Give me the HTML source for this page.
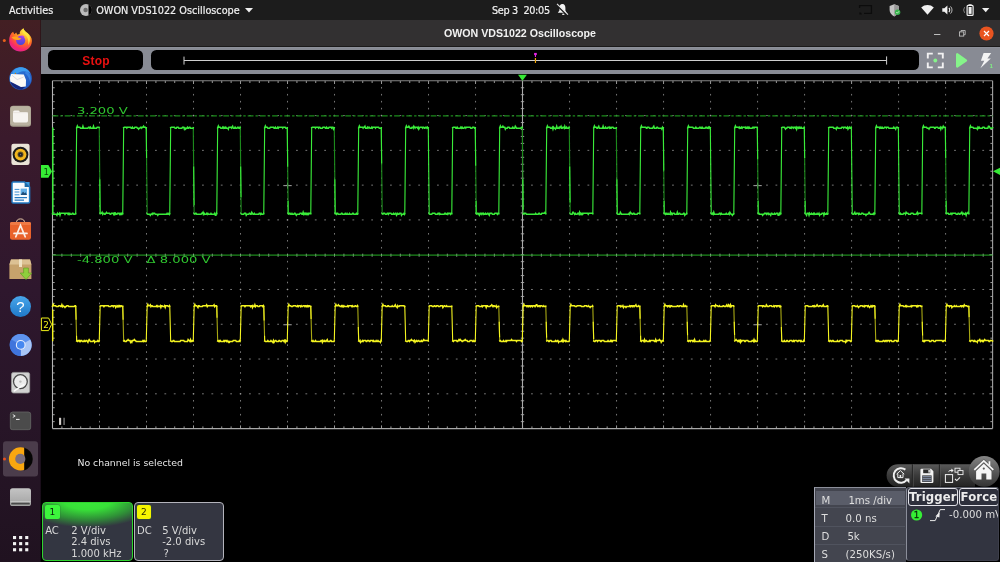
<!DOCTYPE html>
<html lang="en">
<head>
<meta charset="utf-8">
<title>OWON VDS1022 Oscilloscope</title>
<style>
*{box-sizing:border-box;margin:0;padding:0}
html,body{width:1000px;height:562px;overflow:hidden;background:#000}
body{position:relative;font-family:"DejaVu Sans","Liberation Sans",sans-serif;color:#dcdcdc}
#root{position:absolute;left:0;top:0;width:1000px;height:562px;overflow:hidden;will-change:transform;background:#000}
.abs{position:absolute}
.t{position:absolute;white-space:nowrap;line-height:1}
/* ---------- gnome top bar ---------- */
#topbar{left:0;top:0;width:1000px;height:20px;background:#1c1c1c}
.ub{font-family:"DejaVu Sans","Liberation Sans",sans-serif;color:#f0f0f0;font-size:9.7px;-webkit-text-stroke:.2px #f0f0f0}
/* ---------- dock ---------- */
#dock{left:0;top:20px;width:41px;height:542px;background:linear-gradient(180deg,#431f23 0%,#3a1a2c 22%,#2e172d 50%,#271527 75%,#201220 100%);border-right:1.2px solid rgba(0,0,0,.28)}
/* ---------- window ---------- */
#titlebar{left:41px;top:20px;width:959px;height:27px;background:#323031;border-bottom:1px solid #1b1a1a}
#toolbar{left:41px;top:47px;width:959px;height:27px;background:#888b94;border-top:1px solid #8d909a}
.pill{position:absolute;background:#000;border-radius:5.5px}
/* ---------- scope ---------- */
#scope{left:41px;top:74px;width:959px;height:488px;background:#000}
svg{position:absolute;left:0;top:0;overflow:visible}
.wide{font-family:"DejaVu Sans","Liberation Sans",sans-serif;font-size:9px;fill:#2fc62f}
/* ---------- bottom panels ---------- */
.chbox{position:absolute;top:502px;height:59.4px;border-radius:4px;font-size:10px;color:#d9d9d9}
.badge{position:absolute;left:2.1px;top:1.8px;width:14.5px;height:14.5px;border-radius:2px;color:#0b250b;box-shadow:0 0 0 .5px rgba(40,120,50,.5);font-size:9px;text-align:center;line-height:14.5px}
.row{position:absolute;white-space:nowrap;line-height:1}
#timebox{left:814px;top:487px;width:92px;height:75px;background:#43454f;border-left:1px solid #a4a7b4;border-top:1px solid #8c8f9a;padding-left:1px;font-size:10.2px;color:#dedede}
#trigbox{left:906px;top:487px;width:92.8px;height:74.2px;background:#323440;border:1px solid #3d3f4b;border-left-color:#8b8e9a;border-top-color:#5a5d68;border-radius:3px;overflow:hidden;font-size:10.2px;color:#dedede}
.tbtn{position:absolute;top:1.3px;height:17.4px;border:1px solid #e2e2e8;border-radius:3px;font-weight:bold;font-size:11.7px;color:#ececec;line-height:17.2px;letter-spacing:.12px;background:#2e303c;text-align:center;overflow:hidden}
</style>
</head>
<body>
<div id="root">

<!-- ======================= GNOME TOP BAR ======================= -->
<div class="abs" id="topbar">
  <span class="t ub" id="act" style="left:9.1px;top:6px">Activities</span>
  <svg width="14" height="14" style="left:78.7px;top:3px" viewBox="0 0 14 14"><circle cx="7" cy="7" r="6" fill="#bcbcbc"/><path d="M9.5 1.500A6.100 6.100 0 0 1 9.500 12.500Z" fill="#030303"/><circle cx="6.600" cy="7" r="2.200" fill="#6e6e6e"/></svg>
  <span class="t ub" id="appname" style="left:96.2px;top:6px">OWON VDS1022 Oscilloscope</span>
  <svg width="8" height="5" style="left:244.5px;top:8px" viewBox="0 0 8 5"><path d="M0 0H8L4 4.6Z" fill="#eee"/></svg>
  <span class="t ub" id="clock" style="left:492px;top:5.8px;letter-spacing:-.32px">Sep 3&nbsp; 20:05</span>
  <!-- bell muted -->
  <svg width="14" height="14" style="left:556px;top:3px" viewBox="0 0 14 14"><path d="M6.400 1C4.200 1 3.400 3 3.400 5V7.400L1.800 9.800H10.600L9.400 7.400V5C9.400 3 8.600 1 6.400 1Z" fill="#f2f2f2"/><ellipse cx="7.300" cy="11.300" rx="1.300" ry=".750" fill="#f2f2f2"/><path d="M.3 1.600L11.300 12.400" stroke="#1c1c1c" stroke-width="1.500"/><path d="M1 .9L12 11.700" stroke="#e4e4e4" stroke-width="1.150"/></svg>
  <!-- cast icon (very dark) -->
  <svg width="13" height="10" style="left:859px;top:4.5px" viewBox="0 0 13 10"><path d="M.6 3V.6H12.4V8.4H5" stroke="#0c0c0c" stroke-width="1.3" fill="none"/><path d="M.4 9.6V7.2A2.4 2.4 0 0 1 2.8 9.6Z" fill="#0c0c0c"/></svg>
  <!-- shield -->
  <svg width="12" height="13" style="left:889px;top:3.5px" viewBox="0 0 12 13"><path d="M5.2 0.3L.6 2V6C.6 9 2.6 11.2 5.2 12.4C7.8 11.2 9.8 9 9.8 6V2Z" fill="#c4c4c4"/><path d="M5.2 0.3V12.4C7.8 11.2 9.8 9 9.8 6V2Z" fill="#9a9a9a"/><circle cx="8.6" cy="8.2" r="2.7" fill="#35b34a"/><path d="M7.3 8.2L8.3 9.2L10 7.3" stroke="#dff5df" stroke-width=".8" fill="none"/></svg>
  <!-- wifi -->
  <svg width="13" height="10" style="left:921.3px;top:5px" viewBox="0 0 13 10"><path d="M6.5 9.8L.2 2.4A9.6 9.6 0 0 1 12.8 2.4Z" fill="#f0f0f0"/></svg>
  <!-- volume -->
  <svg width="12" height="10" style="left:942.3px;top:5px" viewBox="0 0 12 10"><path d="M.3 3.3H2.4L5.4.5V9.5L2.4 6.7H.3Z" fill="#f0f0f0"/><path d="M6.9 3A2.8 2.8 0 0 1 6.9 7" stroke="#f0f0f0" stroke-width="1.1" fill="none"/><path d="M8.5 1.4A5 5 0 0 1 8.5 8.6" stroke="#b5b5b5" stroke-width="1" fill="none"/></svg>
  <!-- battery -->
  <svg width="12" height="12" style="left:962.5px;top:3.5px" viewBox="0 0 12 12"><path d="M1.6 3.2L.6 6L1.6 8.8" stroke="#8d8d8d" stroke-width=".9" fill="none"/><rect x="5.6" y="0.3" width="3" height="1.4" fill="#f0f0f0"/><rect x="4.1" y="1.4" width="6" height="10" rx="1" fill="none" stroke="#f0f0f0" stroke-width="1.2"/><rect x="5.6" y="3" width="3" height="6.9" fill="#f0f0f0"/></svg>
  <svg width="8" height="5" style="left:981.8px;top:7.6px" viewBox="0 0 8 5"><path d="M0 0H7.4L3.7 4.2Z" fill="#eee"/></svg>
</div>

<!-- ======================= DOCK ======================= -->
<div class="abs" id="dock"></div>
<svg width="41" height="562" viewBox="0 0 41 562" id="dockicons">
  <defs>
    <radialGradient id="ffg" gradientUnits="userSpaceOnUse" cx="26" cy="30" r="24"><stop offset="0" stop-color="#fff245"/><stop offset=".3" stop-color="#ffb82c"/><stop offset=".58" stop-color="#ff6a25"/><stop offset=".82" stop-color="#f6286c"/><stop offset="1" stop-color="#d8249c"/></radialGradient><linearGradient id="ffp" x1="0" y1="0" x2="0" y2="1"><stop offset="0" stop-color="#a23fea"/><stop offset="1" stop-color="#4348d8"/></linearGradient>
    <linearGradient id="tbg" x1="0" y1="0" x2="1" y2="1"><stop offset="0" stop-color="#2f83e2"/><stop offset="1" stop-color="#1d4fb8"/></linearGradient>
    <linearGradient id="hlp" x1="0" y1="0" x2="0" y2="1"><stop offset="0" stop-color="#48a6ea"/><stop offset="1" stop-color="#1f78c8"/></linearGradient>
    <linearGradient id="drv" x1="0" y1="0" x2="0" y2="1"><stop offset="0" stop-color="#c4c4c4"/><stop offset="1" stop-color="#a2a2a2"/></linearGradient>
  </defs>
  <!-- firefox -->
  <circle cx="4.3" cy="40.4" r="1.5" fill="#e8601c"/>
  <path d="M9.2 41C9 36.600 10.400 33.600 13.100 31.800L14.300 34.200L16.200 32.600L17.300 34.800C18 34.200 19 33.900 19.700 33.900C19.400 31.600 21 29.600 23.400 28.200C23.600 30.200 25.400 31.400 27.400 33C30.400 35.400 32 38 31.900 41C31.800 47 26.700 51.500 20.500 51.500C14.400 51.500 9.400 47 9.200 41Z" fill="url(#ffg)"/>
  <path d="M23.400 28.200C23.600 30.200 25.400 31.400 27.400 33C30.200 35.400 31 40.200 28.200 45.200C29 40.600 27.400 36.600 24.600 34.600C22.400 33 21.600 30.800 23.400 28.200Z" fill="#ffe53e" opacity=".9"/>
  <circle cx="20.700" cy="40.400" r="4.600" fill="url(#ffp)"/>
  <path d="M11.400 37.400C13.600 36.200 16.800 36.400 18.200 37.600L21.400 38.400C20 39.800 17.800 40.400 16 39.800C14.200 39.200 12.800 38.600 11.400 37.400Z" fill="#ffa41e"/>
  <path d="M21 35.600C22.400 35.400 23.800 35.900 24.600 36.800L22.600 37.200Z" fill="#c23fe0"/>
  <!-- thunderbird -->
  <circle cx="20.600" cy="78.500" r="11.300" fill="url(#tbg)"/>
  <path d="M12.400 73.400C13.400 68.600 19 66.400 23 67.400C26.400 68.200 29.200 70.400 30.400 73.600C27.200 70.800 22.200 70.600 19 72.600C17 73.800 15.200 74.400 12.400 74.400Z" fill="#3b9df0"/>
  <path d="M27 70.800C30.400 73.600 31.600 78.600 30.200 83C29.600 79 28.200 75.400 24.800 73Z" fill="#3f8de8" opacity=".7"/>
  <path d="M10.200 81C11.400 86.400 16 89.700 21.600 89.700L26 86.200L21 87Z" fill="#14277c"/>
  <path d="M11.200 74L23.800 74.600L26 80L25.800 86.400L21 87L10.200 81.400L10 77.600Z" fill="#fbfaf6"/>
  <path d="M12 75.200L17.200 79.600L23.600 77" stroke="#d4d2d8" stroke-width=".8" fill="none"/>
  <circle cx="15.400" cy="73.400" r=".7" fill="#c47a1c"/>
  <!-- files -->
  <rect x="10" y="105.7" width="21" height="21" rx="3.2" fill="#a9a290"/>
  <rect x="10.6" y="106.3" width="19.8" height="19" rx="2.8" fill="#b9b2a0"/>
  <path d="M13 112.2A1.6 1.6 0 0 1 14.6 110.6H18.6L20 112H26.4A1.6 1.6 0 0 1 28 113.6V120.8A1.6 1.6 0 0 1 26.4 122.4H14.6A1.6 1.6 0 0 1 13 120.8Z" fill="#f6f4f0"/>
  <path d="M13 112.6H28" stroke="#e2ded6" stroke-width=".7"/>
  <!-- rhythmbox -->
  <rect x="11.4" y="143.8" width="18.2" height="21.2" rx="2.2" fill="#e9e3d6"/>
  <circle cx="20.5" cy="154.6" r="7.9" fill="#1b1b1b"/>
  <circle cx="20.5" cy="154.6" r="5.9" fill="#f2b61e"/>
  <circle cx="20.5" cy="154.6" r="3" fill="#6e5a22"/>
  <circle cx="20.5" cy="154.6" r="2.2" fill="#242424"/>
  <circle cx="20.5" cy="154.6" r=".7" fill="#777"/>
  <!-- libreoffice writer -->
  <path d="M12 183.2A1.2 1.2 0 0 1 13.2 182H24.6L29.6 187V201.8A1.2 1.2 0 0 1 28.4 203H13.2A1.2 1.2 0 0 1 12 201.8Z" fill="#fafcfe" stroke="#2179c2" stroke-width="1.5"/>
  <path d="M24.6 182L29.6 187H24.6Z" fill="#1c6aa8"/>
  <path d="M25.2 182H29.6V186.4Z" fill="#3b9be0"/>
  <path d="M14.6 189.4H19.4M14.6 192H19.4M14.6 194.8H19.4" stroke="#3b8fd0" stroke-width="1"/>
  <path d="M14.6 197.6H27M14.6 200.2H24" stroke="#2277bf" stroke-width="1.3"/>
  <rect x="20.6" y="188.6" width="6.4" height="6.4" fill="#62aee6"/>
  <path d="M20.6 195L23 191.4L24.6 193.2L25.6 192.2L27 195Z" fill="#1f4e79"/>
  <!-- ubuntu software -->
  <path d="M16.4 223A4.1 4.1 0 0 1 24.6 223" stroke="#e9c9a8" stroke-width="1" fill="none"/>
  <rect x="10" y="222" width="21" height="17.8" rx="2.2" fill="#e9622b"/>
  <rect x="10" y="222" width="21" height="3" rx="1.5" fill="#f07a45"/>
  <path d="M15.8 236.8L20.5 225.4L25.2 236.8M14 233.4H27" stroke="#fbeee6" stroke-width="1.7" fill="none" stroke-linecap="round"/>
  <!-- package installer -->
  <path d="M11 259.4H30L31.4 264.4V279H9.4V264.4Z" fill="#c6a26c"/>
  <path d="M11 259.4H30L31.4 264.4H9.4Z" fill="#dcc193"/>
  <rect x="19" y="259.4" width="3" height="7.6" fill="#efe3c6"/>
  <path d="M23.6 268H28.4V273H31.8L26 279.6L20.2 273H23.6Z" fill="#8fce3c" stroke="#5e9a20" stroke-width=".6"/>
  <!-- help -->
  <circle cx="20.5" cy="306.6" r="10.5" fill="url(#hlp)"/>
  <text x="20.5" y="312" font-family="Liberation Sans, sans-serif" font-size="15" fill="#fff" text-anchor="middle">?</text>
  <!-- chromium -->
  <circle cx="20.7" cy="344.9" r="11" fill="#4a80e2"/>
  <path d="M20.7 344.9L11.2 339.4A11 11 0 0 1 30.2 339.4Z" fill="#5e93ee"/>
  <path d="M20.7 344.9L30.2 339.4A11 11 0 0 1 20.7 355.9Z" fill="#a9c6f6"/>
  <path d="M20.7 344.9L20.7 355.9A11 11 0 0 1 11.2 339.4Z" fill="#3f74dc"/>
  <circle cx="20.7" cy="344.9" r="4.9" fill="#e8effc"/>
  <circle cx="20.7" cy="344.9" r="3.8" fill="#4688f0"/>
  <!-- disks -->
  <rect x="11.5" y="372.4" width="18.2" height="20.6" rx="2" fill="#d1d1d1" stroke="#9b9b9b" stroke-width=".8"/>
  <circle cx="20.4" cy="381.6" r="6.9" fill="#ececec" stroke="#484848" stroke-width="1.25"/>
  <circle cx="20.4" cy="381.6" r="1.2" fill="#bcbcbc"/>
  <path d="M14.4 390.8L23.6 384.6" stroke="#fafafa" stroke-width="1.6" stroke-linecap="round"/>
  <!-- terminal -->
  <rect x="10" y="411.8" width="21" height="18.2" rx="2.6" fill="#4b4b4b"/>
  <rect x="10.3" y="412.100" width="20.400" height="17.600" rx="2.400" fill="none" stroke="#636363" stroke-width=".700"/>
  <path d="M12.8 414.6L15.2 416L12.8 417.4" stroke="#f1f1f1" stroke-width=".9" fill="none"/>
  <path d="M16 419.4H19.6" stroke="#f1f1f1" stroke-width="1"/>
  <!-- active app (OWON) -->
  <rect x="3" y="441.3" width="35" height="35.2" rx="3" fill="#4b3c4b"/>
  <circle cx="4.5" cy="459" r="1.5" fill="#e9501c"/>
  <circle cx="20.5" cy="458.9" r="11.6" fill="#f9a70f"/>
  <path d="M24.2 447.4A12 12 0 0 1 24.2 470.400Z" fill="#050505"/>
  <circle cx="20.3" cy="458.9" r="5.1" fill="#7c6f7c"/>
  <!-- drive -->
  <rect x="10" y="488.2" width="21" height="17.8" rx="2.6" fill="url(#drv)"/>
  <path d="M10.400 501.600H30.600" stroke="#d2d2d2" stroke-width=".700"/>
  <path d="M12 503.700H29" stroke="#4a4a4a" stroke-width="1.700" stroke-linecap="round"/>
  <!-- app grid -->
  <g fill="#f3f3f3">
    <rect x="13" y="536" width="3.1" height="3.1"/><rect x="19.1" y="536" width="3.1" height="3.1"/><rect x="25.2" y="536" width="3.1" height="3.1"/>
    <rect x="13" y="542.1" width="3.1" height="3.1"/><rect x="19.1" y="542.1" width="3.1" height="3.1"/><rect x="25.2" y="542.1" width="3.1" height="3.1"/>
    <rect x="13" y="548.2" width="3.1" height="3.1"/><rect x="19.1" y="548.2" width="3.1" height="3.1"/><rect x="25.2" y="548.2" width="3.1" height="3.1"/>
  </g>
</svg>

<!-- ======================= WINDOW ======================= -->
<div class="abs" id="titlebar">
  <span class="t ub" id="wtitle" style="-webkit-text-stroke:0;left:403px;top:8.1px;font-size:10.65px;font-weight:bold;color:#f2f2f2;font-family:'Liberation Sans',sans-serif">OWON VDS1022 Oscilloscope</span>
  <svg width="8" height="2" style="left:893px;top:13.5px" viewBox="0 0 8 2"><rect width="6.4" height="1" fill="#bdbdbd"/></svg>
  <svg width="8" height="8" style="left:917.6px;top:9.8px" viewBox="0 0 8 8"><rect x=".5" y="1.9" width="4.2" height="4.2" fill="none" stroke="#bcbcbc" stroke-width=".9"/><path d="M2 1.9V.5H6.2V4.7H4.8" fill="none" stroke="#bcbcbc" stroke-width=".9"/></svg>
  <svg width="15" height="15" style="left:938.4px;top:5.6px" viewBox="0 0 15 15"><circle cx="7.5" cy="7.5" r="7.1" fill="#e95420"/><path d="M5 5L10 10M10 5L5 10" stroke="#fff" stroke-width="1.2"/></svg>
</div>

<div class="abs" id="toolbar">
  <div class="pill" style="left:7.2px;top:2.4px;width:95.2px;height:19.6px"></div>
  <span class="t" id="stop" style="left:41.3px;top:6.6px;font-size:12px;font-weight:bold;color:#ea1010;font-family:'Liberation Sans',sans-serif;letter-spacing:.18px">Stop</span>
  <div class="pill" style="left:110px;top:2.4px;width:768.2px;height:19.6px"></div>
  <svg width="959" height="27" viewBox="41 47 959 27" style="left:0;top:-1px">
    <path d="M184 60.5H886.6M184 56.6V64.6M886.6 56.4V64.6" stroke="#cfcfcf" stroke-width="1" fill="none"/>
    <path d="M534.1 54H536.8" stroke="#e323e3" stroke-width="2.2"/>
    <path d="M535.45 54V57" stroke="#e323e3" stroke-width="1.1"/>
    <path d="M535.45 58V63" stroke="#f2a500" stroke-width="1.2"/>
    <!-- single-shot / target -->
    <path d="M927.8 58.6V53.6H932.8M937.8 53.6H942.8V58.6M942.8 62.4V67.4H937.8M932.8 67.4H927.8V62.4" stroke="#f2f2f2" stroke-width="1.9" fill="none"/>
    <circle cx="935.3" cy="60.5" r="1.9" fill="#86f48a"/>
    <!-- play -->
    <path d="M956 54.2V66.6A1.2 1.2 0 0 0 957.8 67.6L966.6 61.4A1.1 1.1 0 0 0 966.6 59.6L957.8 53.2A1.2 1.2 0 0 0 956 54.2Z" fill="#86f48a"/>
    <!-- lightning -->
    <path d="M983.6 53H991.2L987.4 58.5H990.8L980.4 68.2L984.3 60.8H980.9Z" fill="#f4f4f4"/>
    <text x="989.6" y="68.2" font-family="Liberation Sans, sans-serif" font-weight="bold" font-size="6.2" fill="#7fee83">1</text>
  </svg>
</div>

<div class="abs" id="scope"></div>

<!-- ======================= SCOPE GRAPHICS ======================= -->
<svg width="1000" height="562" viewBox="0 0 1000 562" id="plot">
<path d="M99.5 86.96v1.6M99.5 93.91v1.6M99.5 100.87v1.6M99.5 107.82v1.6M99.5 114.78v1.6M99.5 121.74v1.6M99.5 128.69v1.6M99.5 135.65v1.6M99.5 142.6v1.6M99.5 149.56v1.6M99.5 156.52v1.6M99.5 163.47v1.6M99.5 170.43v1.6M99.5 177.38v1.6M99.5 184.34v1.6M99.5 191.3v1.6M99.5 198.25v1.6M99.5 205.21v1.6M99.5 212.16v1.6M99.5 219.12v1.6M99.5 226.08v1.6M99.5 233.03v1.6M99.5 239.99v1.6M99.5 246.94v1.6M99.5 253.9v1.6M99.5 260.86v1.6M99.5 267.81v1.6M99.5 274.77v1.6M99.5 281.72v1.6M99.5 288.68v1.6M99.5 295.64v1.6M99.5 302.59v1.6M99.5 309.55v1.6M99.5 316.5v1.6M99.5 323.46v1.6M99.5 330.42v1.6M99.5 337.37v1.6M99.5 344.33v1.6M99.5 351.28v1.6M99.5 358.24v1.6M99.5 365.2v1.6M99.5 372.15v1.6M99.5 379.11v1.6M99.5 386.06v1.6M99.5 393.02v1.6M99.5 399.98v1.6M99.5 406.93v1.6M99.5 413.89v1.6M99.5 420.84v1.6M146.51 86.96v1.6M146.51 93.91v1.6M146.51 100.87v1.6M146.51 107.82v1.6M146.51 114.78v1.6M146.51 121.74v1.6M146.51 128.69v1.6M146.51 135.65v1.6M146.51 142.6v1.6M146.51 149.56v1.6M146.51 156.52v1.6M146.51 163.47v1.6M146.51 170.43v1.6M146.51 177.38v1.6M146.51 184.34v1.6M146.51 191.3v1.6M146.51 198.25v1.6M146.51 205.21v1.6M146.51 212.16v1.6M146.51 219.12v1.6M146.51 226.08v1.6M146.51 233.03v1.6M146.51 239.99v1.6M146.51 246.94v1.6M146.51 253.9v1.6M146.51 260.86v1.6M146.51 267.81v1.6M146.51 274.77v1.6M146.51 281.72v1.6M146.51 288.68v1.6M146.51 295.64v1.6M146.51 302.59v1.6M146.51 309.55v1.6M146.51 316.5v1.6M146.51 323.46v1.6M146.51 330.42v1.6M146.51 337.37v1.6M146.51 344.33v1.6M146.51 351.28v1.6M146.51 358.24v1.6M146.51 365.2v1.6M146.51 372.15v1.6M146.51 379.11v1.6M146.51 386.06v1.6M146.51 393.02v1.6M146.51 399.98v1.6M146.51 406.93v1.6M146.51 413.89v1.6M146.51 420.84v1.6M193.52 86.96v1.6M193.52 93.91v1.6M193.52 100.87v1.6M193.52 107.82v1.6M193.52 114.78v1.6M193.52 121.74v1.6M193.52 128.69v1.6M193.52 135.65v1.6M193.52 142.6v1.6M193.52 149.56v1.6M193.52 156.52v1.6M193.52 163.47v1.6M193.52 170.43v1.6M193.52 177.38v1.6M193.52 184.34v1.6M193.52 191.3v1.6M193.52 198.25v1.6M193.52 205.21v1.6M193.52 212.16v1.6M193.52 219.12v1.6M193.52 226.08v1.6M193.52 233.03v1.6M193.52 239.99v1.6M193.52 246.94v1.6M193.52 253.9v1.6M193.52 260.86v1.6M193.52 267.81v1.6M193.52 274.77v1.6M193.52 281.72v1.6M193.52 288.68v1.6M193.52 295.64v1.6M193.52 302.59v1.6M193.52 309.55v1.6M193.52 316.5v1.6M193.52 323.46v1.6M193.52 330.42v1.6M193.52 337.37v1.6M193.52 344.33v1.6M193.52 351.28v1.6M193.52 358.24v1.6M193.52 365.2v1.6M193.52 372.15v1.6M193.52 379.11v1.6M193.52 386.06v1.6M193.52 393.02v1.6M193.52 399.98v1.6M193.52 406.93v1.6M193.52 413.89v1.6M193.52 420.84v1.6M240.52 86.96v1.6M240.52 93.91v1.6M240.52 100.87v1.6M240.52 107.82v1.6M240.52 114.78v1.6M240.52 121.74v1.6M240.52 128.69v1.6M240.52 135.65v1.6M240.52 142.6v1.6M240.52 149.56v1.6M240.52 156.52v1.6M240.52 163.47v1.6M240.52 170.43v1.6M240.52 177.38v1.6M240.52 184.34v1.6M240.52 191.3v1.6M240.52 198.25v1.6M240.52 205.21v1.6M240.52 212.16v1.6M240.52 219.12v1.6M240.52 226.08v1.6M240.52 233.03v1.6M240.52 239.99v1.6M240.52 246.94v1.6M240.52 253.9v1.6M240.52 260.86v1.6M240.52 267.81v1.6M240.52 274.77v1.6M240.52 281.72v1.6M240.52 288.68v1.6M240.52 295.64v1.6M240.52 302.59v1.6M240.52 309.55v1.6M240.52 316.5v1.6M240.52 323.46v1.6M240.52 330.42v1.6M240.52 337.37v1.6M240.52 344.33v1.6M240.52 351.28v1.6M240.52 358.24v1.6M240.52 365.2v1.6M240.52 372.15v1.6M240.52 379.11v1.6M240.52 386.06v1.6M240.52 393.02v1.6M240.52 399.98v1.6M240.52 406.93v1.6M240.52 413.89v1.6M240.52 420.84v1.6M287.52 86.96v1.6M287.52 93.91v1.6M287.52 100.87v1.6M287.52 107.82v1.6M287.52 114.78v1.6M287.52 121.74v1.6M287.52 128.69v1.6M287.52 135.65v1.6M287.52 142.6v1.6M287.52 149.56v1.6M287.52 156.52v1.6M287.52 163.47v1.6M287.52 170.43v1.6M287.52 177.38v1.6M287.52 184.34v1.6M287.52 191.3v1.6M287.52 198.25v1.6M287.52 205.21v1.6M287.52 212.16v1.6M287.52 219.12v1.6M287.52 226.08v1.6M287.52 233.03v1.6M287.52 239.99v1.6M287.52 246.94v1.6M287.52 253.9v1.6M287.52 260.86v1.6M287.52 267.81v1.6M287.52 274.77v1.6M287.52 281.72v1.6M287.52 288.68v1.6M287.52 295.64v1.6M287.52 302.59v1.6M287.52 309.55v1.6M287.52 316.5v1.6M287.52 323.46v1.6M287.52 330.42v1.6M287.52 337.37v1.6M287.52 344.33v1.6M287.52 351.28v1.6M287.52 358.24v1.6M287.52 365.2v1.6M287.52 372.15v1.6M287.52 379.11v1.6M287.52 386.06v1.6M287.52 393.02v1.6M287.52 399.98v1.6M287.52 406.93v1.6M287.52 413.89v1.6M287.52 420.84v1.6M334.53 86.96v1.6M334.53 93.91v1.6M334.53 100.87v1.6M334.53 107.82v1.6M334.53 114.78v1.6M334.53 121.74v1.6M334.53 128.69v1.6M334.53 135.65v1.6M334.53 142.6v1.6M334.53 149.56v1.6M334.53 156.52v1.6M334.53 163.47v1.6M334.53 170.43v1.6M334.53 177.38v1.6M334.53 184.34v1.6M334.53 191.3v1.6M334.53 198.25v1.6M334.53 205.21v1.6M334.53 212.16v1.6M334.53 219.12v1.6M334.53 226.08v1.6M334.53 233.03v1.6M334.53 239.99v1.6M334.53 246.94v1.6M334.53 253.9v1.6M334.53 260.86v1.6M334.53 267.81v1.6M334.53 274.77v1.6M334.53 281.72v1.6M334.53 288.68v1.6M334.53 295.64v1.6M334.53 302.59v1.6M334.53 309.55v1.6M334.53 316.5v1.6M334.53 323.46v1.6M334.53 330.42v1.6M334.53 337.37v1.6M334.53 344.33v1.6M334.53 351.28v1.6M334.53 358.24v1.6M334.53 365.2v1.6M334.53 372.15v1.6M334.53 379.11v1.6M334.53 386.06v1.6M334.53 393.02v1.6M334.53 399.98v1.6M334.53 406.93v1.6M334.53 413.89v1.6M334.53 420.84v1.6M381.54 86.96v1.6M381.54 93.91v1.6M381.54 100.87v1.6M381.54 107.82v1.6M381.54 114.78v1.6M381.54 121.74v1.6M381.54 128.69v1.6M381.54 135.65v1.6M381.54 142.6v1.6M381.54 149.56v1.6M381.54 156.52v1.6M381.54 163.47v1.6M381.54 170.43v1.6M381.54 177.38v1.6M381.54 184.34v1.6M381.54 191.3v1.6M381.54 198.25v1.6M381.54 205.21v1.6M381.54 212.16v1.6M381.54 219.12v1.6M381.54 226.08v1.6M381.54 233.03v1.6M381.54 239.99v1.6M381.54 246.94v1.6M381.54 253.9v1.6M381.54 260.86v1.6M381.54 267.81v1.6M381.54 274.77v1.6M381.54 281.72v1.6M381.54 288.68v1.6M381.54 295.64v1.6M381.54 302.59v1.6M381.54 309.55v1.6M381.54 316.5v1.6M381.54 323.46v1.6M381.54 330.42v1.6M381.54 337.37v1.6M381.54 344.33v1.6M381.54 351.28v1.6M381.54 358.24v1.6M381.54 365.2v1.6M381.54 372.15v1.6M381.54 379.11v1.6M381.54 386.06v1.6M381.54 393.02v1.6M381.54 399.98v1.6M381.54 406.93v1.6M381.54 413.89v1.6M381.54 420.84v1.6M428.54 86.96v1.6M428.54 93.91v1.6M428.54 100.87v1.6M428.54 107.82v1.6M428.54 114.78v1.6M428.54 121.74v1.6M428.54 128.69v1.6M428.54 135.65v1.6M428.54 142.6v1.6M428.54 149.56v1.6M428.54 156.52v1.6M428.54 163.47v1.6M428.54 170.43v1.6M428.54 177.38v1.6M428.54 184.34v1.6M428.54 191.3v1.6M428.54 198.25v1.6M428.54 205.21v1.6M428.54 212.16v1.6M428.54 219.12v1.6M428.54 226.08v1.6M428.54 233.03v1.6M428.54 239.99v1.6M428.54 246.94v1.6M428.54 253.9v1.6M428.54 260.86v1.6M428.54 267.81v1.6M428.54 274.77v1.6M428.54 281.72v1.6M428.54 288.68v1.6M428.54 295.64v1.6M428.54 302.59v1.6M428.54 309.55v1.6M428.54 316.5v1.6M428.54 323.46v1.6M428.54 330.42v1.6M428.54 337.37v1.6M428.54 344.33v1.6M428.54 351.28v1.6M428.54 358.24v1.6M428.54 365.2v1.6M428.54 372.15v1.6M428.54 379.11v1.6M428.54 386.06v1.6M428.54 393.02v1.6M428.54 399.98v1.6M428.54 406.93v1.6M428.54 413.89v1.6M428.54 420.84v1.6M475.55 86.96v1.6M475.55 93.91v1.6M475.55 100.87v1.6M475.55 107.82v1.6M475.55 114.78v1.6M475.55 121.74v1.6M475.55 128.69v1.6M475.55 135.65v1.6M475.55 142.6v1.6M475.55 149.56v1.6M475.55 156.52v1.6M475.55 163.47v1.6M475.55 170.43v1.6M475.55 177.38v1.6M475.55 184.34v1.6M475.55 191.3v1.6M475.55 198.25v1.6M475.55 205.21v1.6M475.55 212.16v1.6M475.55 219.12v1.6M475.55 226.08v1.6M475.55 233.03v1.6M475.55 239.99v1.6M475.55 246.94v1.6M475.55 253.9v1.6M475.55 260.86v1.6M475.55 267.81v1.6M475.55 274.77v1.6M475.55 281.72v1.6M475.55 288.68v1.6M475.55 295.64v1.6M475.55 302.59v1.6M475.55 309.55v1.6M475.55 316.5v1.6M475.55 323.46v1.6M475.55 330.42v1.6M475.55 337.37v1.6M475.55 344.33v1.6M475.55 351.28v1.6M475.55 358.24v1.6M475.55 365.2v1.6M475.55 372.15v1.6M475.55 379.11v1.6M475.55 386.06v1.6M475.55 393.02v1.6M475.55 399.98v1.6M475.55 406.93v1.6M475.55 413.89v1.6M475.55 420.84v1.6M569.56 86.96v1.6M569.56 93.91v1.6M569.56 100.87v1.6M569.56 107.82v1.6M569.56 114.78v1.6M569.56 121.74v1.6M569.56 128.69v1.6M569.56 135.65v1.6M569.56 142.6v1.6M569.56 149.56v1.6M569.56 156.52v1.6M569.56 163.47v1.6M569.56 170.43v1.6M569.56 177.38v1.6M569.56 184.34v1.6M569.56 191.3v1.6M569.56 198.25v1.6M569.56 205.21v1.6M569.56 212.16v1.6M569.56 219.12v1.6M569.56 226.08v1.6M569.56 233.03v1.6M569.56 239.99v1.6M569.56 246.94v1.6M569.56 253.9v1.6M569.56 260.86v1.6M569.56 267.81v1.6M569.56 274.77v1.6M569.56 281.72v1.6M569.56 288.68v1.6M569.56 295.64v1.6M569.56 302.59v1.6M569.56 309.55v1.6M569.56 316.5v1.6M569.56 323.46v1.6M569.56 330.42v1.6M569.56 337.37v1.6M569.56 344.33v1.6M569.56 351.28v1.6M569.56 358.24v1.6M569.56 365.2v1.6M569.56 372.15v1.6M569.56 379.11v1.6M569.56 386.06v1.6M569.56 393.02v1.6M569.56 399.98v1.6M569.56 406.93v1.6M569.56 413.89v1.6M569.56 420.84v1.6M616.56 86.96v1.6M616.56 93.91v1.6M616.56 100.87v1.6M616.56 107.82v1.6M616.56 114.78v1.6M616.56 121.74v1.6M616.56 128.69v1.6M616.56 135.65v1.6M616.56 142.6v1.6M616.56 149.56v1.6M616.56 156.52v1.6M616.56 163.47v1.6M616.56 170.43v1.6M616.56 177.38v1.6M616.56 184.34v1.6M616.56 191.3v1.6M616.56 198.25v1.6M616.56 205.21v1.6M616.56 212.16v1.6M616.56 219.12v1.6M616.56 226.08v1.6M616.56 233.03v1.6M616.56 239.99v1.6M616.56 246.94v1.6M616.56 253.9v1.6M616.56 260.86v1.6M616.56 267.81v1.6M616.56 274.77v1.6M616.56 281.72v1.6M616.56 288.68v1.6M616.56 295.64v1.6M616.56 302.59v1.6M616.56 309.55v1.6M616.56 316.5v1.6M616.56 323.46v1.6M616.56 330.42v1.6M616.56 337.37v1.6M616.56 344.33v1.6M616.56 351.28v1.6M616.56 358.24v1.6M616.56 365.2v1.6M616.56 372.15v1.6M616.56 379.11v1.6M616.56 386.06v1.6M616.56 393.02v1.6M616.56 399.98v1.6M616.56 406.93v1.6M616.56 413.89v1.6M616.56 420.84v1.6M663.57 86.96v1.6M663.57 93.91v1.6M663.57 100.87v1.6M663.57 107.82v1.6M663.57 114.78v1.6M663.57 121.74v1.6M663.57 128.69v1.6M663.57 135.65v1.6M663.57 142.6v1.6M663.57 149.56v1.6M663.57 156.52v1.6M663.57 163.47v1.6M663.57 170.43v1.6M663.57 177.38v1.6M663.57 184.34v1.6M663.57 191.3v1.6M663.57 198.25v1.6M663.57 205.21v1.6M663.57 212.16v1.6M663.57 219.12v1.6M663.57 226.08v1.6M663.57 233.03v1.6M663.57 239.99v1.6M663.57 246.94v1.6M663.57 253.9v1.6M663.57 260.86v1.6M663.57 267.81v1.6M663.57 274.77v1.6M663.57 281.72v1.6M663.57 288.68v1.6M663.57 295.64v1.6M663.57 302.59v1.6M663.57 309.55v1.6M663.57 316.5v1.6M663.57 323.46v1.6M663.57 330.42v1.6M663.57 337.37v1.6M663.57 344.33v1.6M663.57 351.28v1.6M663.57 358.24v1.6M663.57 365.2v1.6M663.57 372.15v1.6M663.57 379.11v1.6M663.57 386.06v1.6M663.57 393.02v1.6M663.57 399.98v1.6M663.57 406.93v1.6M663.57 413.89v1.6M663.57 420.84v1.6M710.57 86.96v1.6M710.57 93.91v1.6M710.57 100.87v1.6M710.57 107.82v1.6M710.57 114.78v1.6M710.57 121.74v1.6M710.57 128.69v1.6M710.57 135.65v1.6M710.57 142.6v1.6M710.57 149.56v1.6M710.57 156.52v1.6M710.57 163.47v1.6M710.57 170.43v1.6M710.57 177.38v1.6M710.57 184.34v1.6M710.57 191.3v1.6M710.57 198.25v1.6M710.57 205.21v1.6M710.57 212.16v1.6M710.57 219.12v1.6M710.57 226.08v1.6M710.57 233.03v1.6M710.57 239.99v1.6M710.57 246.94v1.6M710.57 253.9v1.6M710.57 260.86v1.6M710.57 267.81v1.6M710.57 274.77v1.6M710.57 281.72v1.6M710.57 288.68v1.6M710.57 295.64v1.6M710.57 302.59v1.6M710.57 309.55v1.6M710.57 316.5v1.6M710.57 323.46v1.6M710.57 330.42v1.6M710.57 337.37v1.6M710.57 344.33v1.6M710.57 351.28v1.6M710.57 358.24v1.6M710.57 365.2v1.6M710.57 372.15v1.6M710.57 379.11v1.6M710.57 386.06v1.6M710.57 393.02v1.6M710.57 399.98v1.6M710.57 406.93v1.6M710.57 413.89v1.6M710.57 420.84v1.6M757.58 86.96v1.6M757.58 93.91v1.6M757.58 100.87v1.6M757.58 107.82v1.6M757.58 114.78v1.6M757.58 121.74v1.6M757.58 128.69v1.6M757.58 135.65v1.6M757.58 142.6v1.6M757.58 149.56v1.6M757.58 156.52v1.6M757.58 163.47v1.6M757.58 170.43v1.6M757.58 177.38v1.6M757.58 184.34v1.6M757.58 191.3v1.6M757.58 198.25v1.6M757.58 205.21v1.6M757.58 212.16v1.6M757.58 219.12v1.6M757.58 226.08v1.6M757.58 233.03v1.6M757.58 239.99v1.6M757.58 246.94v1.6M757.58 253.9v1.6M757.58 260.86v1.6M757.58 267.81v1.6M757.58 274.77v1.6M757.58 281.72v1.6M757.58 288.68v1.6M757.58 295.64v1.6M757.58 302.59v1.6M757.58 309.55v1.6M757.58 316.5v1.6M757.58 323.46v1.6M757.58 330.42v1.6M757.58 337.37v1.6M757.58 344.33v1.6M757.58 351.28v1.6M757.58 358.24v1.6M757.58 365.2v1.6M757.58 372.15v1.6M757.58 379.11v1.6M757.58 386.06v1.6M757.58 393.02v1.6M757.58 399.98v1.6M757.58 406.93v1.6M757.58 413.89v1.6M757.58 420.84v1.6M804.58 86.96v1.6M804.58 93.91v1.6M804.58 100.87v1.6M804.58 107.82v1.6M804.58 114.78v1.6M804.58 121.74v1.6M804.58 128.69v1.6M804.58 135.65v1.6M804.58 142.6v1.6M804.58 149.56v1.6M804.58 156.52v1.6M804.58 163.47v1.6M804.58 170.43v1.6M804.58 177.38v1.6M804.58 184.34v1.6M804.58 191.3v1.6M804.58 198.25v1.6M804.58 205.21v1.6M804.58 212.16v1.6M804.58 219.12v1.6M804.58 226.08v1.6M804.58 233.03v1.6M804.58 239.99v1.6M804.58 246.94v1.6M804.58 253.9v1.6M804.58 260.86v1.6M804.58 267.81v1.6M804.58 274.77v1.6M804.58 281.72v1.6M804.58 288.68v1.6M804.58 295.64v1.6M804.58 302.59v1.6M804.58 309.55v1.6M804.58 316.5v1.6M804.58 323.46v1.6M804.58 330.42v1.6M804.58 337.37v1.6M804.58 344.33v1.6M804.58 351.28v1.6M804.58 358.24v1.6M804.58 365.2v1.6M804.58 372.15v1.6M804.58 379.11v1.6M804.58 386.06v1.6M804.58 393.02v1.6M804.58 399.98v1.6M804.58 406.93v1.6M804.58 413.89v1.6M804.58 420.84v1.6M851.59 86.96v1.6M851.59 93.91v1.6M851.59 100.87v1.6M851.59 107.82v1.6M851.59 114.78v1.6M851.59 121.74v1.6M851.59 128.69v1.6M851.59 135.65v1.6M851.59 142.6v1.6M851.59 149.56v1.6M851.59 156.52v1.6M851.59 163.47v1.6M851.59 170.43v1.6M851.59 177.38v1.6M851.59 184.34v1.6M851.59 191.3v1.6M851.59 198.25v1.6M851.59 205.21v1.6M851.59 212.16v1.6M851.59 219.12v1.6M851.59 226.08v1.6M851.59 233.03v1.6M851.59 239.99v1.6M851.59 246.94v1.6M851.59 253.9v1.6M851.59 260.86v1.6M851.59 267.81v1.6M851.59 274.77v1.6M851.59 281.72v1.6M851.59 288.68v1.6M851.59 295.64v1.6M851.59 302.59v1.6M851.59 309.55v1.6M851.59 316.5v1.6M851.59 323.46v1.6M851.59 330.42v1.6M851.59 337.37v1.6M851.59 344.33v1.6M851.59 351.28v1.6M851.59 358.24v1.6M851.59 365.2v1.6M851.59 372.15v1.6M851.59 379.11v1.6M851.59 386.06v1.6M851.59 393.02v1.6M851.59 399.98v1.6M851.59 406.93v1.6M851.59 413.89v1.6M851.59 420.84v1.6M898.59 86.96v1.6M898.59 93.91v1.6M898.59 100.87v1.6M898.59 107.82v1.6M898.59 114.78v1.6M898.59 121.74v1.6M898.59 128.69v1.6M898.59 135.65v1.6M898.59 142.6v1.6M898.59 149.56v1.6M898.59 156.52v1.6M898.59 163.47v1.6M898.59 170.43v1.6M898.59 177.38v1.6M898.59 184.34v1.6M898.59 191.3v1.6M898.59 198.25v1.6M898.59 205.21v1.6M898.59 212.16v1.6M898.59 219.12v1.6M898.59 226.08v1.6M898.59 233.03v1.6M898.59 239.99v1.6M898.59 246.94v1.6M898.59 253.9v1.6M898.59 260.86v1.6M898.59 267.81v1.6M898.59 274.77v1.6M898.59 281.72v1.6M898.59 288.68v1.6M898.59 295.64v1.6M898.59 302.59v1.6M898.59 309.55v1.6M898.59 316.5v1.6M898.59 323.46v1.6M898.59 330.42v1.6M898.59 337.37v1.6M898.59 344.33v1.6M898.59 351.28v1.6M898.59 358.24v1.6M898.59 365.2v1.6M898.59 372.15v1.6M898.59 379.11v1.6M898.59 386.06v1.6M898.59 393.02v1.6M898.59 399.98v1.6M898.59 406.93v1.6M898.59 413.89v1.6M898.59 420.84v1.6M945.6 86.96v1.6M945.6 93.91v1.6M945.6 100.87v1.6M945.6 107.82v1.6M945.6 114.78v1.6M945.6 121.74v1.6M945.6 128.69v1.6M945.6 135.65v1.6M945.6 142.6v1.6M945.6 149.56v1.6M945.6 156.52v1.6M945.6 163.47v1.6M945.6 170.43v1.6M945.6 177.38v1.6M945.6 184.34v1.6M945.6 191.3v1.6M945.6 198.25v1.6M945.6 205.21v1.6M945.6 212.16v1.6M945.6 219.12v1.6M945.6 226.08v1.6M945.6 233.03v1.6M945.6 239.99v1.6M945.6 246.94v1.6M945.6 253.9v1.6M945.6 260.86v1.6M945.6 267.81v1.6M945.6 274.77v1.6M945.6 281.72v1.6M945.6 288.68v1.6M945.6 295.64v1.6M945.6 302.59v1.6M945.6 309.55v1.6M945.6 316.5v1.6M945.6 323.46v1.6M945.6 330.42v1.6M945.6 337.37v1.6M945.6 344.33v1.6M945.6 351.28v1.6M945.6 358.24v1.6M945.6 365.2v1.6M945.6 372.15v1.6M945.6 379.11v1.6M945.6 386.06v1.6M945.6 393.02v1.6M945.6 399.98v1.6M945.6 406.93v1.6M945.6 413.89v1.6M945.6 420.84v1.6" stroke="#b0b0b0" stroke-width="1" fill="none" opacity=".68"/>
<path d="M61 115.58h1.8M70.4 115.58h1.8M79.8 115.58h1.8M89.2 115.58h1.8M98.6 115.58h1.8M108.01 115.58h1.8M117.41 115.58h1.8M126.81 115.58h1.8M136.21 115.58h1.8M145.61 115.58h1.8M155.01 115.58h1.8M164.41 115.58h1.8M173.81 115.58h1.8M183.21 115.58h1.8M192.61 115.58h1.8M202.02 115.58h1.8M211.42 115.58h1.8M220.82 115.58h1.8M230.22 115.58h1.8M239.62 115.58h1.8M249.02 115.58h1.8M258.42 115.58h1.8M267.82 115.58h1.8M277.22 115.58h1.8M286.62 115.58h1.8M296.03 115.58h1.8M305.43 115.58h1.8M314.83 115.58h1.8M324.23 115.58h1.8M333.63 115.58h1.8M343.03 115.58h1.8M352.43 115.58h1.8M361.83 115.58h1.8M371.23 115.58h1.8M380.63 115.58h1.8M390.04 115.58h1.8M399.44 115.58h1.8M408.84 115.58h1.8M418.24 115.58h1.8M427.64 115.58h1.8M437.04 115.58h1.8M446.44 115.58h1.8M455.84 115.58h1.8M465.24 115.58h1.8M474.65 115.58h1.8M484.05 115.58h1.8M493.45 115.58h1.8M502.85 115.58h1.8M512.25 115.58h1.8M521.65 115.58h1.8M531.05 115.58h1.8M540.45 115.58h1.8M549.85 115.58h1.8M559.25 115.58h1.8M568.65 115.58h1.8M578.06 115.58h1.8M587.46 115.58h1.8M596.86 115.58h1.8M606.26 115.58h1.8M615.66 115.58h1.8M625.06 115.58h1.8M634.46 115.58h1.8M643.86 115.58h1.8M653.26 115.58h1.8M662.66 115.58h1.8M672.07 115.58h1.8M681.47 115.58h1.8M690.87 115.58h1.8M700.27 115.58h1.8M709.67 115.58h1.8M719.07 115.58h1.8M728.47 115.58h1.8M737.87 115.58h1.8M747.27 115.58h1.8M756.67 115.58h1.8M766.08 115.58h1.8M775.48 115.58h1.8M784.88 115.58h1.8M794.28 115.58h1.8M803.68 115.58h1.8M813.08 115.58h1.8M822.48 115.58h1.8M831.88 115.58h1.8M841.28 115.58h1.8M850.69 115.58h1.8M860.09 115.58h1.8M869.49 115.58h1.8M878.89 115.58h1.8M888.29 115.58h1.8M897.69 115.58h1.8M907.09 115.58h1.8M916.49 115.58h1.8M925.89 115.58h1.8M935.29 115.58h1.8M944.7 115.58h1.8M954.1 115.58h1.8M963.5 115.58h1.8M972.9 115.58h1.8M982.3 115.58h1.8M61 150.36h1.8M70.4 150.36h1.8M79.8 150.36h1.8M89.2 150.36h1.8M98.6 150.36h1.8M108.01 150.36h1.8M117.41 150.36h1.8M126.81 150.36h1.8M136.21 150.36h1.8M145.61 150.36h1.8M155.01 150.36h1.8M164.41 150.36h1.8M173.81 150.36h1.8M183.21 150.36h1.8M192.61 150.36h1.8M202.02 150.36h1.8M211.42 150.36h1.8M220.82 150.36h1.8M230.22 150.36h1.8M239.62 150.36h1.8M249.02 150.36h1.8M258.42 150.36h1.8M267.82 150.36h1.8M277.22 150.36h1.8M286.62 150.36h1.8M296.03 150.36h1.8M305.43 150.36h1.8M314.83 150.36h1.8M324.23 150.36h1.8M333.63 150.36h1.8M343.03 150.36h1.8M352.43 150.36h1.8M361.83 150.36h1.8M371.23 150.36h1.8M380.63 150.36h1.8M390.04 150.36h1.8M399.44 150.36h1.8M408.84 150.36h1.8M418.24 150.36h1.8M427.64 150.36h1.8M437.04 150.36h1.8M446.44 150.36h1.8M455.84 150.36h1.8M465.24 150.36h1.8M474.65 150.36h1.8M484.05 150.36h1.8M493.45 150.36h1.8M502.85 150.36h1.8M512.25 150.36h1.8M521.65 150.36h1.8M531.05 150.36h1.8M540.45 150.36h1.8M549.85 150.36h1.8M559.25 150.36h1.8M568.65 150.36h1.8M578.06 150.36h1.8M587.46 150.36h1.8M596.86 150.36h1.8M606.26 150.36h1.8M615.66 150.36h1.8M625.06 150.36h1.8M634.46 150.36h1.8M643.86 150.36h1.8M653.26 150.36h1.8M662.66 150.36h1.8M672.07 150.36h1.8M681.47 150.36h1.8M690.87 150.36h1.8M700.27 150.36h1.8M709.67 150.36h1.8M719.07 150.36h1.8M728.47 150.36h1.8M737.87 150.36h1.8M747.27 150.36h1.8M756.67 150.36h1.8M766.08 150.36h1.8M775.48 150.36h1.8M784.88 150.36h1.8M794.28 150.36h1.8M803.68 150.36h1.8M813.08 150.36h1.8M822.48 150.36h1.8M831.88 150.36h1.8M841.28 150.36h1.8M850.69 150.36h1.8M860.09 150.36h1.8M869.49 150.36h1.8M878.89 150.36h1.8M888.29 150.36h1.8M897.69 150.36h1.8M907.09 150.36h1.8M916.49 150.36h1.8M925.89 150.36h1.8M935.29 150.36h1.8M944.7 150.36h1.8M954.1 150.36h1.8M963.5 150.36h1.8M972.9 150.36h1.8M982.3 150.36h1.8M61 185.14h1.8M70.4 185.14h1.8M79.8 185.14h1.8M89.2 185.14h1.8M98.6 185.14h1.8M108.01 185.14h1.8M117.41 185.14h1.8M126.81 185.14h1.8M136.21 185.14h1.8M145.61 185.14h1.8M155.01 185.14h1.8M164.41 185.14h1.8M173.81 185.14h1.8M183.21 185.14h1.8M192.61 185.14h1.8M202.02 185.14h1.8M211.42 185.14h1.8M220.82 185.14h1.8M230.22 185.14h1.8M239.62 185.14h1.8M249.02 185.14h1.8M258.42 185.14h1.8M267.82 185.14h1.8M277.22 185.14h1.8M286.62 185.14h1.8M296.03 185.14h1.8M305.43 185.14h1.8M314.83 185.14h1.8M324.23 185.14h1.8M333.63 185.14h1.8M343.03 185.14h1.8M352.43 185.14h1.8M361.83 185.14h1.8M371.23 185.14h1.8M380.63 185.14h1.8M390.04 185.14h1.8M399.44 185.14h1.8M408.84 185.14h1.8M418.24 185.14h1.8M427.64 185.14h1.8M437.04 185.14h1.8M446.44 185.14h1.8M455.84 185.14h1.8M465.24 185.14h1.8M474.65 185.14h1.8M484.05 185.14h1.8M493.45 185.14h1.8M502.85 185.14h1.8M512.25 185.14h1.8M521.65 185.14h1.8M531.05 185.14h1.8M540.45 185.14h1.8M549.85 185.14h1.8M559.25 185.14h1.8M568.65 185.14h1.8M578.06 185.14h1.8M587.46 185.14h1.8M596.86 185.14h1.8M606.26 185.14h1.8M615.66 185.14h1.8M625.06 185.14h1.8M634.46 185.14h1.8M643.86 185.14h1.8M653.26 185.14h1.8M662.66 185.14h1.8M672.07 185.14h1.8M681.47 185.14h1.8M690.87 185.14h1.8M700.27 185.14h1.8M709.67 185.14h1.8M719.07 185.14h1.8M728.47 185.14h1.8M737.87 185.14h1.8M747.27 185.14h1.8M756.67 185.14h1.8M766.08 185.14h1.8M775.48 185.14h1.8M784.88 185.14h1.8M794.28 185.14h1.8M803.68 185.14h1.8M813.08 185.14h1.8M822.48 185.14h1.8M831.88 185.14h1.8M841.28 185.14h1.8M850.69 185.14h1.8M860.09 185.14h1.8M869.49 185.14h1.8M878.89 185.14h1.8M888.29 185.14h1.8M897.69 185.14h1.8M907.09 185.14h1.8M916.49 185.14h1.8M925.89 185.14h1.8M935.29 185.14h1.8M944.7 185.14h1.8M954.1 185.14h1.8M963.5 185.14h1.8M972.9 185.14h1.8M982.3 185.14h1.8M61 219.92h1.8M70.4 219.92h1.8M79.8 219.92h1.8M89.2 219.92h1.8M98.6 219.92h1.8M108.01 219.92h1.8M117.41 219.92h1.8M126.81 219.92h1.8M136.21 219.92h1.8M145.61 219.92h1.8M155.01 219.92h1.8M164.41 219.92h1.8M173.81 219.92h1.8M183.21 219.92h1.8M192.61 219.92h1.8M202.02 219.92h1.8M211.42 219.92h1.8M220.82 219.92h1.8M230.22 219.92h1.8M239.62 219.92h1.8M249.02 219.92h1.8M258.42 219.92h1.8M267.82 219.92h1.8M277.22 219.92h1.8M286.62 219.92h1.8M296.03 219.92h1.8M305.43 219.92h1.8M314.83 219.92h1.8M324.23 219.92h1.8M333.63 219.92h1.8M343.03 219.92h1.8M352.43 219.92h1.8M361.83 219.92h1.8M371.23 219.92h1.8M380.63 219.92h1.8M390.04 219.92h1.8M399.44 219.92h1.8M408.84 219.92h1.8M418.24 219.92h1.8M427.64 219.92h1.8M437.04 219.92h1.8M446.44 219.92h1.8M455.84 219.92h1.8M465.24 219.92h1.8M474.65 219.92h1.8M484.05 219.92h1.8M493.45 219.92h1.8M502.85 219.92h1.8M512.25 219.92h1.8M521.65 219.92h1.8M531.05 219.92h1.8M540.45 219.92h1.8M549.85 219.92h1.8M559.25 219.92h1.8M568.65 219.92h1.8M578.06 219.92h1.8M587.46 219.92h1.8M596.86 219.92h1.8M606.26 219.92h1.8M615.66 219.92h1.8M625.06 219.92h1.8M634.46 219.92h1.8M643.86 219.92h1.8M653.26 219.92h1.8M662.66 219.92h1.8M672.07 219.92h1.8M681.47 219.92h1.8M690.87 219.92h1.8M700.27 219.92h1.8M709.67 219.92h1.8M719.07 219.92h1.8M728.47 219.92h1.8M737.87 219.92h1.8M747.27 219.92h1.8M756.67 219.92h1.8M766.08 219.92h1.8M775.48 219.92h1.8M784.88 219.92h1.8M794.28 219.92h1.8M803.68 219.92h1.8M813.08 219.92h1.8M822.48 219.92h1.8M831.88 219.92h1.8M841.28 219.92h1.8M850.69 219.92h1.8M860.09 219.92h1.8M869.49 219.92h1.8M878.89 219.92h1.8M888.29 219.92h1.8M897.69 219.92h1.8M907.09 219.92h1.8M916.49 219.92h1.8M925.89 219.92h1.8M935.29 219.92h1.8M944.7 219.92h1.8M954.1 219.92h1.8M963.5 219.92h1.8M972.9 219.92h1.8M982.3 219.92h1.8M61 289.48h1.8M70.4 289.48h1.8M79.8 289.48h1.8M89.2 289.48h1.8M98.6 289.48h1.8M108.01 289.48h1.8M117.41 289.48h1.8M126.81 289.48h1.8M136.21 289.48h1.8M145.61 289.48h1.8M155.01 289.48h1.8M164.41 289.48h1.8M173.81 289.48h1.8M183.21 289.48h1.8M192.61 289.48h1.8M202.02 289.48h1.8M211.42 289.48h1.8M220.82 289.48h1.8M230.22 289.48h1.8M239.62 289.48h1.8M249.02 289.48h1.8M258.42 289.48h1.8M267.82 289.48h1.8M277.22 289.48h1.8M286.62 289.48h1.8M296.03 289.48h1.8M305.43 289.48h1.8M314.83 289.48h1.8M324.23 289.48h1.8M333.63 289.48h1.8M343.03 289.48h1.8M352.43 289.48h1.8M361.83 289.48h1.8M371.23 289.48h1.8M380.63 289.48h1.8M390.04 289.48h1.8M399.44 289.48h1.8M408.84 289.48h1.8M418.24 289.48h1.8M427.64 289.48h1.8M437.04 289.48h1.8M446.44 289.48h1.8M455.84 289.48h1.8M465.24 289.48h1.8M474.65 289.48h1.8M484.05 289.48h1.8M493.45 289.48h1.8M502.85 289.48h1.8M512.25 289.48h1.8M521.65 289.48h1.8M531.05 289.48h1.8M540.45 289.48h1.8M549.85 289.48h1.8M559.25 289.48h1.8M568.65 289.48h1.8M578.06 289.48h1.8M587.46 289.48h1.8M596.86 289.48h1.8M606.26 289.48h1.8M615.66 289.48h1.8M625.06 289.48h1.8M634.46 289.48h1.8M643.86 289.48h1.8M653.26 289.48h1.8M662.66 289.48h1.8M672.07 289.48h1.8M681.47 289.48h1.8M690.87 289.48h1.8M700.27 289.48h1.8M709.67 289.48h1.8M719.07 289.48h1.8M728.47 289.48h1.8M737.87 289.48h1.8M747.27 289.48h1.8M756.67 289.48h1.8M766.08 289.48h1.8M775.48 289.48h1.8M784.88 289.48h1.8M794.28 289.48h1.8M803.68 289.48h1.8M813.08 289.48h1.8M822.48 289.48h1.8M831.88 289.48h1.8M841.28 289.48h1.8M850.69 289.48h1.8M860.09 289.48h1.8M869.49 289.48h1.8M878.89 289.48h1.8M888.29 289.48h1.8M897.69 289.48h1.8M907.09 289.48h1.8M916.49 289.48h1.8M925.89 289.48h1.8M935.29 289.48h1.8M944.7 289.48h1.8M954.1 289.48h1.8M963.5 289.48h1.8M972.9 289.48h1.8M982.3 289.48h1.8M61 324.26h1.8M70.4 324.26h1.8M79.8 324.26h1.8M89.2 324.26h1.8M98.6 324.26h1.8M108.01 324.26h1.8M117.41 324.26h1.8M126.81 324.26h1.8M136.21 324.26h1.8M145.61 324.26h1.8M155.01 324.26h1.8M164.41 324.26h1.8M173.81 324.26h1.8M183.21 324.26h1.8M192.61 324.26h1.8M202.02 324.26h1.8M211.42 324.26h1.8M220.82 324.26h1.8M230.22 324.26h1.8M239.62 324.26h1.8M249.02 324.26h1.8M258.42 324.26h1.8M267.82 324.26h1.8M277.22 324.26h1.8M286.62 324.26h1.8M296.03 324.26h1.8M305.43 324.26h1.8M314.83 324.26h1.8M324.23 324.26h1.8M333.63 324.26h1.8M343.03 324.26h1.8M352.43 324.26h1.8M361.83 324.26h1.8M371.23 324.26h1.8M380.63 324.26h1.8M390.04 324.26h1.8M399.44 324.26h1.8M408.84 324.26h1.8M418.24 324.26h1.8M427.64 324.26h1.8M437.04 324.26h1.8M446.44 324.26h1.8M455.84 324.26h1.8M465.24 324.26h1.8M474.65 324.26h1.8M484.05 324.26h1.8M493.45 324.26h1.8M502.85 324.26h1.8M512.25 324.26h1.8M521.65 324.26h1.8M531.05 324.26h1.8M540.45 324.26h1.8M549.85 324.26h1.8M559.25 324.26h1.8M568.65 324.26h1.8M578.06 324.26h1.8M587.46 324.26h1.8M596.86 324.26h1.8M606.26 324.26h1.8M615.66 324.26h1.8M625.06 324.26h1.8M634.46 324.26h1.8M643.86 324.26h1.8M653.26 324.26h1.8M662.66 324.26h1.8M672.07 324.26h1.8M681.47 324.26h1.8M690.87 324.26h1.8M700.27 324.26h1.8M709.67 324.26h1.8M719.07 324.26h1.8M728.47 324.26h1.8M737.87 324.26h1.8M747.27 324.26h1.8M756.67 324.26h1.8M766.08 324.26h1.8M775.48 324.26h1.8M784.88 324.26h1.8M794.28 324.26h1.8M803.68 324.26h1.8M813.08 324.26h1.8M822.48 324.26h1.8M831.88 324.26h1.8M841.28 324.26h1.8M850.69 324.26h1.8M860.09 324.26h1.8M869.49 324.26h1.8M878.89 324.26h1.8M888.29 324.26h1.8M897.69 324.26h1.8M907.09 324.26h1.8M916.49 324.26h1.8M925.89 324.26h1.8M935.29 324.26h1.8M944.7 324.26h1.8M954.1 324.26h1.8M963.5 324.26h1.8M972.9 324.26h1.8M982.3 324.26h1.8M61 359.04h1.8M70.4 359.04h1.8M79.8 359.04h1.8M89.2 359.04h1.8M98.6 359.04h1.8M108.01 359.04h1.8M117.41 359.04h1.8M126.81 359.04h1.8M136.21 359.04h1.8M145.61 359.04h1.8M155.01 359.04h1.8M164.41 359.04h1.8M173.81 359.04h1.8M183.21 359.04h1.8M192.61 359.04h1.8M202.02 359.04h1.8M211.42 359.04h1.8M220.82 359.04h1.8M230.22 359.04h1.8M239.62 359.04h1.8M249.02 359.04h1.8M258.42 359.04h1.8M267.82 359.04h1.8M277.22 359.04h1.8M286.62 359.04h1.8M296.03 359.04h1.8M305.43 359.04h1.8M314.83 359.04h1.8M324.23 359.04h1.8M333.63 359.04h1.8M343.03 359.04h1.8M352.43 359.04h1.8M361.83 359.04h1.8M371.23 359.04h1.8M380.63 359.04h1.8M390.04 359.04h1.8M399.44 359.04h1.8M408.84 359.04h1.8M418.24 359.04h1.8M427.64 359.04h1.8M437.04 359.04h1.8M446.44 359.04h1.8M455.84 359.04h1.8M465.24 359.04h1.8M474.65 359.04h1.8M484.05 359.04h1.8M493.45 359.04h1.8M502.85 359.04h1.8M512.25 359.04h1.8M521.65 359.04h1.8M531.05 359.04h1.8M540.45 359.04h1.8M549.85 359.04h1.8M559.25 359.04h1.8M568.65 359.04h1.8M578.06 359.04h1.8M587.46 359.04h1.8M596.86 359.04h1.8M606.26 359.04h1.8M615.66 359.04h1.8M625.06 359.04h1.8M634.46 359.04h1.8M643.86 359.04h1.8M653.26 359.04h1.8M662.66 359.04h1.8M672.07 359.04h1.8M681.47 359.04h1.8M690.87 359.04h1.8M700.27 359.04h1.8M709.67 359.04h1.8M719.07 359.04h1.8M728.47 359.04h1.8M737.87 359.04h1.8M747.27 359.04h1.8M756.67 359.04h1.8M766.08 359.04h1.8M775.48 359.04h1.8M784.88 359.04h1.8M794.28 359.04h1.8M803.68 359.04h1.8M813.08 359.04h1.8M822.48 359.04h1.8M831.88 359.04h1.8M841.28 359.04h1.8M850.69 359.04h1.8M860.09 359.04h1.8M869.49 359.04h1.8M878.89 359.04h1.8M888.29 359.04h1.8M897.69 359.04h1.8M907.09 359.04h1.8M916.49 359.04h1.8M925.89 359.04h1.8M935.29 359.04h1.8M944.7 359.04h1.8M954.1 359.04h1.8M963.5 359.04h1.8M972.9 359.04h1.8M982.3 359.04h1.8M61 393.82h1.8M70.4 393.82h1.8M79.8 393.82h1.8M89.2 393.82h1.8M98.6 393.82h1.8M108.01 393.82h1.8M117.41 393.82h1.8M126.81 393.82h1.8M136.21 393.82h1.8M145.61 393.82h1.8M155.01 393.82h1.8M164.41 393.82h1.8M173.81 393.82h1.8M183.21 393.82h1.8M192.61 393.82h1.8M202.02 393.82h1.8M211.42 393.82h1.8M220.82 393.82h1.8M230.22 393.82h1.8M239.62 393.82h1.8M249.02 393.82h1.8M258.42 393.82h1.8M267.82 393.82h1.8M277.22 393.82h1.8M286.62 393.82h1.8M296.03 393.82h1.8M305.43 393.82h1.8M314.83 393.82h1.8M324.23 393.82h1.8M333.63 393.82h1.8M343.03 393.82h1.8M352.43 393.82h1.8M361.83 393.82h1.8M371.23 393.82h1.8M380.63 393.82h1.8M390.04 393.82h1.8M399.44 393.82h1.8M408.84 393.82h1.8M418.24 393.82h1.8M427.64 393.82h1.8M437.04 393.82h1.8M446.44 393.82h1.8M455.84 393.82h1.8M465.24 393.82h1.8M474.65 393.82h1.8M484.05 393.82h1.8M493.45 393.82h1.8M502.85 393.82h1.8M512.25 393.82h1.8M521.65 393.82h1.8M531.05 393.82h1.8M540.45 393.82h1.8M549.85 393.82h1.8M559.25 393.82h1.8M568.65 393.82h1.8M578.06 393.82h1.8M587.46 393.82h1.8M596.86 393.82h1.8M606.26 393.82h1.8M615.66 393.82h1.8M625.06 393.82h1.8M634.46 393.82h1.8M643.86 393.82h1.8M653.26 393.82h1.8M662.66 393.82h1.8M672.07 393.82h1.8M681.47 393.82h1.8M690.87 393.82h1.8M700.27 393.82h1.8M709.67 393.82h1.8M719.07 393.82h1.8M728.47 393.82h1.8M737.87 393.82h1.8M747.27 393.82h1.8M756.67 393.82h1.8M766.08 393.82h1.8M775.48 393.82h1.8M784.88 393.82h1.8M794.28 393.82h1.8M803.68 393.82h1.8M813.08 393.82h1.8M822.48 393.82h1.8M831.88 393.82h1.8M841.28 393.82h1.8M850.69 393.82h1.8M860.09 393.82h1.8M869.49 393.82h1.8M878.89 393.82h1.8M888.29 393.82h1.8M897.69 393.82h1.8M907.09 393.82h1.8M916.49 393.82h1.8M925.89 393.82h1.8M935.29 393.82h1.8M944.7 393.82h1.8M954.1 393.82h1.8M963.5 393.82h1.8M972.9 393.82h1.8M982.3 393.82h1.8" stroke="#b0b0b0" stroke-width="1" fill="none" opacity=".68"/>
<path d="M61.9 80.8v2.2M61.9 428.6v-2.2M71.3 80.8v2.2M71.3 428.6v-2.2M80.7 80.8v2.2M80.7 428.6v-2.2M90.1 80.8v2.2M90.1 428.6v-2.2M99.5 80.8v3.2M99.5 428.6v-3.2M108.91 80.8v2.2M108.91 428.6v-2.2M118.31 80.8v2.2M118.31 428.6v-2.2M127.71 80.8v2.2M127.71 428.6v-2.2M137.11 80.8v2.2M137.11 428.6v-2.2M146.51 80.8v3.2M146.51 428.6v-3.2M155.91 80.8v2.2M155.91 428.6v-2.2M165.31 80.8v2.2M165.31 428.6v-2.2M174.71 80.8v2.2M174.71 428.6v-2.2M184.11 80.8v2.2M184.11 428.6v-2.2M193.51 80.8v3.2M193.51 428.6v-3.2M202.92 80.8v2.2M202.92 428.6v-2.2M212.32 80.8v2.2M212.32 428.6v-2.2M221.72 80.8v2.2M221.72 428.6v-2.2M231.12 80.8v2.2M231.12 428.6v-2.2M240.52 80.8v3.2M240.52 428.6v-3.2M249.92 80.8v2.2M249.92 428.6v-2.2M259.32 80.8v2.2M259.32 428.6v-2.2M268.72 80.8v2.2M268.72 428.6v-2.2M278.12 80.8v2.2M278.12 428.6v-2.2M287.52 80.8v3.2M287.52 428.6v-3.2M296.93 80.8v2.2M296.93 428.6v-2.2M306.33 80.8v2.2M306.33 428.6v-2.2M315.73 80.8v2.2M315.73 428.6v-2.2M325.13 80.8v2.2M325.13 428.6v-2.2M334.53 80.8v3.2M334.53 428.6v-3.2M343.93 80.8v2.2M343.93 428.6v-2.2M353.33 80.8v2.2M353.33 428.6v-2.2M362.73 80.8v2.2M362.73 428.6v-2.2M372.13 80.8v2.2M372.13 428.6v-2.2M381.53 80.8v3.2M381.53 428.6v-3.2M390.94 80.8v2.2M390.94 428.6v-2.2M400.34 80.8v2.2M400.34 428.6v-2.2M409.74 80.8v2.2M409.74 428.6v-2.2M419.14 80.8v2.2M419.14 428.6v-2.2M428.54 80.8v3.2M428.54 428.6v-3.2M437.94 80.8v2.2M437.94 428.6v-2.2M447.34 80.8v2.2M447.34 428.6v-2.2M456.74 80.8v2.2M456.74 428.6v-2.2M466.14 80.8v2.2M466.14 428.6v-2.2M475.55 80.8v3.2M475.55 428.6v-3.2M484.95 80.8v2.2M484.95 428.6v-2.2M494.35 80.8v2.2M494.35 428.6v-2.2M503.75 80.8v2.2M503.75 428.6v-2.2M513.15 80.8v2.2M513.15 428.6v-2.2M522.55 80.8v3.2M522.55 428.6v-3.2M531.95 80.8v2.2M531.95 428.6v-2.2M541.35 80.8v2.2M541.35 428.6v-2.2M550.75 80.8v2.2M550.75 428.6v-2.2M560.15 80.8v2.2M560.15 428.6v-2.2M569.55 80.8v3.2M569.55 428.6v-3.2M578.96 80.8v2.2M578.96 428.6v-2.2M588.36 80.8v2.2M588.36 428.6v-2.2M597.76 80.8v2.2M597.76 428.6v-2.2M607.16 80.8v2.2M607.16 428.6v-2.2M616.56 80.8v3.2M616.56 428.6v-3.2M625.96 80.8v2.2M625.96 428.6v-2.2M635.36 80.8v2.2M635.36 428.6v-2.2M644.76 80.8v2.2M644.76 428.6v-2.2M654.16 80.8v2.2M654.16 428.6v-2.2M663.56 80.8v3.2M663.56 428.6v-3.2M672.97 80.8v2.2M672.97 428.6v-2.2M682.37 80.8v2.2M682.37 428.6v-2.2M691.77 80.8v2.2M691.77 428.6v-2.2M701.17 80.8v2.2M701.17 428.6v-2.2M710.57 80.8v3.2M710.57 428.6v-3.2M719.97 80.8v2.2M719.97 428.6v-2.2M729.37 80.8v2.2M729.37 428.6v-2.2M738.77 80.8v2.2M738.77 428.6v-2.2M748.17 80.8v2.2M748.17 428.6v-2.2M757.57 80.8v3.2M757.57 428.6v-3.2M766.98 80.8v2.2M766.98 428.6v-2.2M776.38 80.8v2.2M776.38 428.6v-2.2M785.78 80.8v2.2M785.78 428.6v-2.2M795.18 80.8v2.2M795.18 428.6v-2.2M804.58 80.8v3.2M804.58 428.6v-3.2M813.98 80.8v2.2M813.98 428.6v-2.2M823.38 80.8v2.2M823.38 428.6v-2.2M832.78 80.8v2.2M832.78 428.6v-2.2M842.18 80.8v2.2M842.18 428.6v-2.2M851.59 80.8v3.2M851.59 428.6v-3.2M860.99 80.8v2.2M860.99 428.6v-2.2M870.39 80.8v2.2M870.39 428.6v-2.2M879.79 80.8v2.2M879.79 428.6v-2.2M889.19 80.8v2.2M889.19 428.6v-2.2M898.59 80.8v3.2M898.59 428.6v-3.2M907.99 80.8v2.2M907.99 428.6v-2.2M917.39 80.8v2.2M917.39 428.6v-2.2M926.79 80.8v2.2M926.79 428.6v-2.2M936.19 80.8v2.2M936.19 428.6v-2.2M945.6 80.8v3.2M945.6 428.6v-3.2M955 80.8v2.2M955 428.6v-2.2M964.4 80.8v2.2M964.4 428.6v-2.2M973.8 80.8v2.2M973.8 428.6v-2.2M983.2 80.8v2.2M983.2 428.6v-2.2M52.5 87.76h2.2M992.6 87.76h-2.2M52.5 94.71h2.2M992.6 94.71h-2.2M52.5 101.67h2.2M992.6 101.67h-2.2M52.5 108.62h2.2M992.6 108.62h-2.2M52.5 115.58h3.2M992.6 115.58h-3.2M52.5 122.54h2.2M992.6 122.54h-2.2M52.5 129.49h2.2M992.6 129.49h-2.2M52.5 136.45h2.2M992.6 136.45h-2.2M52.5 143.4h2.2M992.6 143.4h-2.2M52.5 150.36h3.2M992.6 150.36h-3.2M52.5 157.32h2.2M992.6 157.32h-2.2M52.5 164.27h2.2M992.6 164.27h-2.2M52.5 171.23h2.2M992.6 171.23h-2.2M52.5 178.18h2.2M992.6 178.18h-2.2M52.5 185.14h3.2M992.6 185.14h-3.2M52.5 192.1h2.2M992.6 192.1h-2.2M52.5 199.05h2.2M992.6 199.05h-2.2M52.5 206.01h2.2M992.6 206.01h-2.2M52.5 212.96h2.2M992.6 212.96h-2.2M52.5 219.92h3.2M992.6 219.92h-3.2M52.5 226.88h2.2M992.6 226.88h-2.2M52.5 233.83h2.2M992.6 233.83h-2.2M52.5 240.79h2.2M992.6 240.79h-2.2M52.5 247.74h2.2M992.6 247.74h-2.2M52.5 254.7h3.2M992.6 254.7h-3.2M52.5 261.66h2.2M992.6 261.66h-2.2M52.5 268.61h2.2M992.6 268.61h-2.2M52.5 275.57h2.2M992.6 275.57h-2.2M52.5 282.52h2.2M992.6 282.52h-2.2M52.5 289.48h3.2M992.6 289.48h-3.2M52.5 296.44h2.2M992.6 296.44h-2.2M52.5 303.39h2.2M992.6 303.39h-2.2M52.5 310.35h2.2M992.6 310.35h-2.2M52.5 317.3h2.2M992.6 317.3h-2.2M52.5 324.26h3.2M992.6 324.26h-3.2M52.5 331.22h2.2M992.6 331.22h-2.2M52.5 338.17h2.2M992.6 338.17h-2.2M52.5 345.13h2.2M992.6 345.13h-2.2M52.5 352.08h2.2M992.6 352.08h-2.2M52.5 359.04h3.2M992.6 359.04h-3.2M52.5 366h2.2M992.6 366h-2.2M52.5 372.95h2.2M992.6 372.95h-2.2M52.5 379.91h2.2M992.6 379.91h-2.2M52.5 386.86h2.2M992.6 386.86h-2.2M52.5 393.82h3.2M992.6 393.82h-3.2M52.5 400.78h2.2M992.6 400.78h-2.2M52.5 407.73h2.2M992.6 407.73h-2.2M52.5 414.69h2.2M992.6 414.69h-2.2M52.5 421.64h2.2M992.6 421.64h-2.2M520.8 87.76h3.4M520.8 94.71h3.4M520.8 101.67h3.4M520.8 108.62h3.4M520.8 115.58h3.4M520.8 122.54h3.4M520.8 129.49h3.4M520.8 136.45h3.4M520.8 143.4h3.4M520.8 150.36h3.4M520.8 157.32h3.4M520.8 164.27h3.4M520.8 171.23h3.4M520.8 178.18h3.4M520.8 185.14h3.4M520.8 192.1h3.4M520.8 199.05h3.4M520.8 206.01h3.4M520.8 212.96h3.4M520.8 219.92h3.4M520.8 226.88h3.4M520.8 233.83h3.4M520.8 240.79h3.4M520.8 247.74h3.4M520.8 254.7h3.4M520.8 261.66h3.4M520.8 268.61h3.4M520.8 275.57h3.4M520.8 282.52h3.4M520.8 289.48h3.4M520.8 296.44h3.4M520.8 303.39h3.4M520.8 310.35h3.4M520.8 317.3h3.4M520.8 324.26h3.4M520.8 331.22h3.4M520.8 338.17h3.4M520.8 345.13h3.4M520.8 352.08h3.4M520.8 359.04h3.4M520.8 366h3.4M520.8 372.95h3.4M520.8 379.91h3.4M520.8 386.86h3.4M520.8 393.82h3.4M520.8 400.78h3.4M520.8 407.73h3.4M520.8 414.69h3.4M520.8 421.64h3.4M61.9 253.7v3M71.3 253.7v3M80.7 253.7v3M90.1 253.7v3M99.5 253.7v3M108.91 253.7v3M118.31 253.7v3M127.71 253.7v3M137.11 253.7v3M146.51 253.7v3M155.91 253.7v3M165.31 253.7v3M174.71 253.7v3M184.11 253.7v3M193.51 253.7v3M202.92 253.7v3M212.32 253.7v3M221.72 253.7v3M231.12 253.7v3M240.52 253.7v3M249.92 253.7v3M259.32 253.7v3M268.72 253.7v3M278.12 253.7v3M287.52 253.7v3M296.93 253.7v3M306.33 253.7v3M315.73 253.7v3M325.13 253.7v3M334.53 253.7v3M343.93 253.7v3M353.33 253.7v3M362.73 253.7v3M372.13 253.7v3M381.53 253.7v3M390.94 253.7v3M400.34 253.7v3M409.74 253.7v3M419.14 253.7v3M428.54 253.7v3M437.94 253.7v3M447.34 253.7v3M456.74 253.7v3M466.14 253.7v3M475.55 253.7v3M484.95 253.7v3M494.35 253.7v3M503.75 253.7v3M513.15 253.7v3M522.55 253.7v3M531.95 253.7v3M541.35 253.7v3M550.75 253.7v3M560.15 253.7v3M569.55 253.7v3M578.96 253.7v3M588.36 253.7v3M597.76 253.7v3M607.16 253.7v3M616.56 253.7v3M625.96 253.7v3M635.36 253.7v3M644.76 253.7v3M654.16 253.7v3M663.56 253.7v3M672.97 253.7v3M682.37 253.7v3M691.77 253.7v3M701.17 253.7v3M710.57 253.7v3M719.97 253.7v3M729.37 253.7v3M738.77 253.7v3M748.17 253.7v3M757.57 253.7v3M766.98 253.7v3M776.38 253.7v3M785.78 253.7v3M795.18 253.7v3M804.58 253.7v3M813.98 253.7v3M823.38 253.7v3M832.78 253.7v3M842.18 253.7v3M851.59 253.7v3M860.99 253.7v3M870.39 253.7v3M879.79 253.7v3M889.19 253.7v3M898.59 253.7v3M907.99 253.7v3M917.39 253.7v3M926.79 253.7v3M936.19 253.7v3M945.6 253.7v3M955 253.7v3M964.4 253.7v3M973.8 253.7v3M983.2 253.7v3" stroke="#b4b4b4" stroke-width="1" fill="none" opacity=".85"/>
<path d="M522.5 80.8V428.6" stroke="#a9a9a9" stroke-width="1.1" fill="none"/>
<path d="M52.5 80.8H992.6" stroke="#858585" stroke-width="1.1" fill="none"/>
<path d="M52.5 428.6H992.6" stroke="#a8a8a8" stroke-width="1.1" fill="none"/>
<path d="M52.5 80.8V428.6" stroke="#b4b4b4" stroke-width="1.1" fill="none"/>
<path d="M992.6 80.8V428.6" stroke="#a2a2a2" stroke-width="1.1" fill="none"/>
<!-- cursors -->
<path d="M52.5 115.8H992.6" stroke="#1b8b1b" stroke-width="1.25" stroke-dasharray="5.8 2 2.4 2" fill="none"/>
<path d="M52.5 255.1H992.6" stroke="#26ae26" stroke-width="1" fill="none"/>
<path d="M283.32 185.64h8.4M287.52 182.64v6M283.32 324.76h8.4M287.52 321.76v6M753.38 185.64h8.4M757.58 182.64v6M753.38 324.76h8.4M757.58 321.76v6" stroke="#a6a6a6" stroke-width="1" fill="none"/>
<path d="M52.8 127.6V213.9" stroke="#3aec3a" stroke-width="1.5" fill="none"/>
<path d="M99.25 127.7L100.15 213.8M146.26 127.7L147.16 213.8M193.26 127.7L194.16 213.8M240.27 127.7L241.17 213.8M287.27 127.7L288.17 213.8M334.28 127.7L335.18 213.8M381.28 127.7L382.18 213.8M475.29 127.7L476.19 213.8M522.3 127.7L523.2 213.8M569.3 127.7L570.2 213.8M616.31 127.7L617.21 213.8M663.31 127.7L664.21 213.8M757.32 127.7L758.22 213.8M804.33 127.7L805.23 213.8M945.34 127.7L946.24 213.8" stroke="#1c8a1c" stroke-width="1.12" fill="none"/>
<path d="M75.75 213.8L76.65 127.7M99.79 179.36L100.15 213.8M122.75 213.8L123.66 127.7M146.26 127.7L146.57 158.06M169.76 213.8L170.66 127.7M193.67 166.44L194.07 205.23M216.77 213.8L217.66 127.7M240.67 166.44L241 197.33M263.77 213.8L264.67 127.7M287.27 127.7L287.68 166.76M288.04 200.88L288.17 213.8M310.78 213.8L311.68 127.7M334.82 179.36L335.18 213.8M357.78 213.8L358.68 127.7M381.28 127.7L381.66 163.49M404.79 213.8L405.69 127.7M428.29 127.7L429.19 213.8M451.79 213.8L452.69 127.7M475.29 127.7L475.69 165.78M476.06 200.88L476.19 213.8M498.8 213.8L499.69 127.7M522.84 179.36L523.16 209.82M545.8 213.8L546.7 127.7M569.71 166.44L570.08 202.54M592.81 213.8L593.71 127.7M616.85 179.36L617.21 213.8M639.81 213.8L640.71 127.7M663.31 127.7L663.76 170.62M664.08 200.88L664.21 213.8M686.82 213.8L687.72 127.7M710.32 127.7L711.22 213.8M733.82 213.8L734.72 127.7M757.32 127.7L757.65 159.2M758.09 200.88L758.22 213.8M780.83 213.8L781.73 127.7M804.33 127.7L804.64 158.03M805.09 200.88L805.23 213.8M827.83 213.8L828.73 127.7M851.33 127.7L852.23 213.8M874.84 213.8L875.74 127.7M898.34 127.7L899.24 213.8M921.84 213.8L922.74 127.7M945.34 127.7L945.66 157.88M946.11 200.88L946.24 213.8M968.85 213.8L969.75 127.7" stroke="#3aec3a" stroke-width="1.12" fill="none"/>
<path d="M52.5 213.8L53.2 214.2L53.82 214.3L54.44 214.3L55.06 214.3L55.68 214.3L56.3 214.3L56.92 215.3L57.54 213.3L58.16 214.3L58.78 214.3L59.4 213.3L60.02 215.3L60.64 213.3L61.26 213.3L61.88 213.3L62.5 213.3L63.12 213.3L63.74 213.3L64.36 213.3L64.98 214.3L65.6 213.3L66.22 213.3L66.84 213.3L67.46 213.3L68.08 214.3L68.7 213.3L69.32 214.3L69.94 213.3L70.56 214.3L71.18 214.3L71.8 214.3L72.42 213.3L73.04 213.3L73.66 214.3L74.28 214.3L74.9 214.3L75.52 213.3L75.75 213.8M76.65 127.7L77.35 125.9L77.97 127.2L78.59 127.2L79.21 127.2L79.83 127.2L80.45 128.2L81.07 128.2L81.69 128.2L82.31 128.2L82.93 126.2L83.55 128.2L84.17 128.2L84.79 128.2L85.41 128.2L86.03 128.2L86.65 128.2L87.27 128.2L87.89 128.2L88.51 127.2L89.13 127.2L89.75 128.2L90.37 127.2L90.99 128.2L91.61 128.2L92.23 128.2L92.85 128.2L93.47 126.2L94.09 128.2L94.71 128.2L95.33 128.2L95.95 128.2L96.57 128.2L97.19 127.2L97.81 127.2L98.43 127.2L99.05 127.2L99.25 127.7M100.15 213.8L100.85 213.3L101.47 213.3L102.09 212.3L102.71 214.3L103.33 213.3L103.95 213.3L104.57 214.3L105.19 214.3L105.81 213.3L106.43 212.3L107.05 213.3L107.67 213.3L108.29 213.3L108.91 213.3L109.53 213.3L110.15 214.3L110.77 214.3L111.39 213.3L112.01 213.3L112.63 213.3L113.25 213.3L113.87 215.3L114.49 212.3L115.11 214.3L115.73 213.3L116.35 214.3L116.97 214.3L117.59 213.3L118.21 213.3L118.83 213.3L119.45 214.3L120.07 213.3L120.69 214.3L121.31 213.3L121.93 214.3L122.55 213.3L122.75 213.8M123.66 127.7L124.36 127.2L124.98 127.2L125.6 127.2L126.22 127.2L126.84 128.2L127.46 127.2L128.08 127.2L128.7 127.2L129.32 127.2L129.94 127.2L130.56 127.2L131.18 128.2L131.8 128.2L132.42 127.2L133.04 128.2L133.66 128.2L134.28 128.2L134.9 127.2L135.52 127.2L136.14 127.2L136.76 127.2L137.38 128.2L138 128.2L138.62 129.2L139.24 128.2L139.86 128.2L140.48 127.2L141.1 127.2L141.72 128.2L142.34 127.2L142.96 127.2L143.58 126.2L144.2 127.2L144.82 127.2L145.44 127.2L146.06 128.2L146.26 127.7M147.16 213.8L147.86 214.2L148.48 214.3L149.1 214.3L149.72 214.3L150.34 215.3L150.96 214.3L151.58 214.3L152.2 213.3L152.82 214.3L153.44 213.3L154.06 213.3L154.68 213.3L155.3 214.3L155.92 214.3L156.54 214.3L157.16 214.3L157.78 215.3L158.4 214.3L159.02 214.3L159.64 214.3L160.26 214.3L160.88 214.3L161.5 214.3L162.12 214.3L162.74 214.3L163.36 214.3L163.98 214.3L164.6 214.3L165.22 214.3L165.84 214.3L166.46 214.3L167.08 213.3L167.7 214.3L168.32 214.3L168.94 213.3L169.56 214.3L169.76 213.8M170.66 127.7L171.36 127.2L171.98 127.2L172.6 127.2L173.22 127.2L173.84 127.2L174.46 127.2L175.08 128.2L175.7 128.2L176.32 128.2L176.94 127.2L177.56 127.2L178.18 127.2L178.8 128.2L179.42 128.2L180.04 128.2L180.66 128.2L181.28 128.2L181.9 128.2L182.52 127.2L183.14 127.2L183.76 127.2L184.38 129.2L185 128.2L185.62 129.2L186.24 128.2L186.86 128.2L187.48 127.2L188.1 128.2L188.72 128.2L189.34 127.2L189.96 127.2L190.58 128.2L191.2 128.2L191.82 128.2L192.44 128.2L193.06 128.2L193.26 127.7M194.16 213.8L194.86 214.2L195.48 213.3L196.1 213.3L196.72 214.3L197.34 214.3L197.96 214.3L198.58 214.3L199.2 214.3L199.82 214.3L200.44 214.3L201.06 214.3L201.68 213.3L202.3 213.3L202.92 212.3L203.54 215.3L204.16 213.3L204.78 214.3L205.4 214.3L206.02 214.3L206.64 213.3L207.26 214.3L207.88 213.3L208.5 214.3L209.12 214.3L209.74 214.3L210.36 214.3L210.98 213.3L211.6 214.3L212.22 214.3L212.84 214.3L213.46 214.3L214.08 214.3L214.7 213.3L215.32 215.3L215.94 215.3L216.56 213.3L216.77 213.8M217.66 127.7L218.36 125.9L218.98 127.2L219.6 127.2L220.22 127.2L220.84 128.2L221.47 128.2L222.09 128.2L222.71 127.2L223.33 128.2L223.95 127.2L224.57 128.2L225.19 128.2L225.81 127.2L226.43 128.2L227.05 128.2L227.67 128.2L228.29 129.2L228.91 127.2L229.53 127.2L230.15 127.2L230.77 127.2L231.39 128.2L232.01 127.2L232.63 126.2L233.25 128.2L233.87 128.2L234.49 128.2L235.11 127.2L235.73 128.2L236.35 128.2L236.97 128.2L237.59 127.2L238.21 127.2L238.83 128.2L239.45 128.2L240.07 127.2L240.27 127.7M241.17 213.8L241.87 214.2L242.49 214.3L243.11 214.3L243.73 214.3L244.35 213.3L244.97 213.3L245.59 213.3L246.21 215.3L246.83 214.3L247.45 214.3L248.07 214.3L248.69 214.3L249.31 213.3L249.93 213.3L250.55 214.3L251.17 214.3L251.79 212.3L252.41 213.3L253.03 214.3L253.65 214.3L254.27 213.3L254.89 214.3L255.51 214.3L256.13 214.3L256.75 214.3L257.37 214.3L257.99 214.3L258.61 214.3L259.23 213.3L259.85 213.3L260.47 214.3L261.09 213.3L261.71 214.3L262.33 214.3L262.95 214.3L263.57 213.3L263.77 213.8M264.67 127.7L265.37 125.9L265.99 127.2L266.61 127.2L267.23 127.2L267.85 128.2L268.47 128.2L269.09 128.2L269.71 128.2L270.33 127.2L270.95 127.2L271.57 127.2L272.19 127.2L272.81 127.2L273.43 127.2L274.05 128.2L274.67 128.2L275.29 127.2L275.91 128.2L276.53 128.2L277.15 128.2L277.77 127.2L278.39 128.2L279.01 127.2L279.63 127.2L280.25 127.2L280.87 127.2L281.49 127.2L282.11 127.2L282.73 128.2L283.35 127.2L283.97 127.2L284.59 127.2L285.21 127.2L285.83 128.2L286.45 128.2L287.07 128.2L287.27 127.7M288.17 213.8L288.87 214.2L289.49 213.3L290.11 213.3L290.73 214.3L291.35 214.3L291.97 213.3L292.59 214.3L293.21 214.3L293.83 214.3L294.45 213.3L295.07 213.3L295.69 214.3L296.31 215.3L296.93 214.3L297.55 214.3L298.17 214.3L298.79 214.3L299.41 214.3L300.03 213.3L300.65 213.3L301.27 213.3L301.89 214.3L302.51 214.3L303.13 212.3L303.75 214.3L304.37 213.3L304.99 214.3L305.61 213.3L306.23 214.3L306.85 213.3L307.47 214.3L308.09 213.3L308.71 214.3L309.33 213.3L309.95 213.3L310.57 213.3L310.78 213.8M311.68 127.7L312.38 127.2L313 127.2L313.62 127.2L314.24 127.2L314.86 127.2L315.48 128.2L316.1 127.2L316.72 127.2L317.34 127.2L317.96 127.2L318.58 128.2L319.2 127.2L319.82 127.2L320.44 128.2L321.06 128.2L321.68 128.2L322.3 128.2L322.92 127.2L323.54 127.2L324.16 127.2L324.78 127.2L325.4 128.2L326.02 128.2L326.64 127.2L327.26 128.2L327.88 128.2L328.5 128.2L329.12 127.2L329.74 127.2L330.36 127.2L330.98 127.2L331.6 128.2L332.22 127.2L332.84 127.2L333.46 129.2L334.08 128.2L334.28 127.7M335.18 213.8L335.88 213.3L336.5 214.3L337.12 213.3L337.74 213.3L338.36 214.3L338.98 214.3L339.6 214.3L340.22 214.3L340.84 214.3L341.46 213.3L342.08 213.3L342.7 214.3L343.32 214.3L343.94 214.3L344.56 214.3L345.18 213.3L345.8 214.3L346.42 214.3L347.04 213.3L347.66 214.3L348.28 214.3L348.9 214.3L349.52 213.3L350.14 214.3L350.76 214.3L351.38 214.3L352 214.3L352.62 213.3L353.24 213.3L353.86 214.3L354.48 214.3L355.1 214.3L355.72 214.3L356.34 213.3L356.96 214.3L357.58 214.3L357.78 213.8M358.68 127.7L359.38 125.9L360 127.2L360.62 127.2L361.24 127.2L361.86 127.2L362.48 127.2L363.1 128.2L363.72 127.2L364.34 127.2L364.96 126.2L365.58 128.2L366.2 128.2L366.82 128.2L367.44 127.2L368.06 128.2L368.68 127.2L369.3 127.2L369.92 128.2L370.54 128.2L371.16 128.2L371.78 127.2L372.4 128.2L373.02 127.2L373.64 127.2L374.26 127.2L374.88 127.2L375.5 128.2L376.12 127.2L376.74 127.2L377.36 127.2L377.98 127.2L378.6 127.2L379.22 128.2L379.84 128.2L380.46 128.2L381.08 128.2L381.28 127.7M382.18 213.8L382.88 214.2L383.5 213.3L384.12 213.3L384.74 213.3L385.36 214.3L385.98 214.3L386.6 214.3L387.22 213.3L387.84 213.3L388.46 214.3L389.08 213.3L389.7 213.3L390.32 213.3L390.94 213.3L391.56 214.3L392.18 214.3L392.8 214.3L393.42 213.3L394.04 214.3L394.66 214.3L395.28 213.3L395.9 213.3L396.52 215.3L397.14 214.3L397.76 213.3L398.38 214.3L399 214.3L399.62 213.3L400.24 213.3L400.86 213.3L401.48 215.3L402.1 214.3L402.72 214.3L403.34 214.3L403.96 213.3L404.58 214.3L404.79 213.8M405.69 127.7L406.38 125.9L407 127.2L407.62 127.2L408.25 127.2L408.87 126.2L409.49 127.2L410.11 128.2L410.73 128.2L411.35 128.2L411.97 127.2L412.59 127.2L413.21 128.2L413.83 126.2L414.45 127.2L415.07 128.2L415.69 127.2L416.31 127.2L416.93 127.2L417.55 128.2L418.17 127.2L418.79 129.2L419.41 128.2L420.03 127.2L420.65 127.2L421.27 127.2L421.89 127.2L422.51 128.2L423.13 127.2L423.75 127.2L424.37 128.2L424.99 128.2L425.61 127.2L426.23 127.2L426.85 128.2L427.47 127.2L428.09 128.2L428.29 127.7M429.19 213.8L429.89 214.2L430.51 214.3L431.13 214.3L431.75 214.3L432.37 213.3L432.99 213.3L433.61 213.3L434.23 213.3L434.85 213.3L435.47 214.3L436.09 214.3L436.71 214.3L437.33 214.3L437.95 213.3L438.57 213.3L439.19 214.3L439.81 213.3L440.43 214.3L441.05 214.3L441.67 214.3L442.29 214.3L442.91 214.3L443.53 214.3L444.15 214.3L444.77 213.3L445.39 213.3L446.01 214.3L446.63 214.3L447.25 213.3L447.87 214.3L448.49 213.3L449.11 213.3L449.73 213.3L450.35 214.3L450.97 213.3L451.59 213.3L451.79 213.8M452.69 127.7L453.39 127.2L454.01 127.2L454.63 127.2L455.25 127.2L455.87 128.2L456.49 128.2L457.11 127.2L457.73 128.2L458.35 128.2L458.97 128.2L459.59 128.2L460.21 128.2L460.83 127.2L461.45 128.2L462.07 127.2L462.69 128.2L463.31 128.2L463.93 128.2L464.55 127.2L465.17 127.2L465.79 128.2L466.41 127.2L467.03 127.2L467.65 127.2L468.27 127.2L468.89 127.2L469.51 127.2L470.13 127.2L470.75 128.2L471.37 128.2L471.99 128.2L472.61 127.2L473.23 127.2L473.85 127.2L474.47 128.2L475.09 128.2L475.29 127.7M476.19 213.8L476.89 214.2L477.51 213.3L478.13 213.3L478.75 214.3L479.37 215.3L479.99 213.3L480.61 213.3L481.23 214.3L481.85 213.3L482.47 213.3L483.09 214.3L483.71 213.3L484.33 214.3L484.95 214.3L485.57 213.3L486.19 214.3L486.81 214.3L487.43 213.3L488.05 213.3L488.67 214.3L489.29 215.3L489.91 213.3L490.53 213.3L491.15 213.3L491.77 213.3L492.39 214.3L493.01 214.3L493.63 214.3L494.25 214.3L494.87 213.3L495.49 213.3L496.11 213.3L496.73 213.3L497.35 214.3L497.97 213.3L498.59 213.3L498.8 213.8M499.69 127.7L500.39 125.9L501.01 127.2L501.63 127.2L502.25 127.2L502.88 126.2L503.5 127.2L504.12 127.2L504.74 127.2L505.36 129.2L505.98 128.2L506.6 128.2L507.22 128.2L507.84 127.2L508.46 127.2L509.08 127.2L509.7 128.2L510.32 128.2L510.94 128.2L511.56 128.2L512.18 128.2L512.8 127.2L513.42 128.2L514.04 128.2L514.66 128.2L515.28 126.2L515.9 127.2L516.52 128.2L517.14 128.2L517.76 128.2L518.38 128.2L519 128.2L519.62 128.2L520.24 128.2L520.86 128.2L521.48 127.2L522.1 127.2L522.3 127.7M523.2 213.8L523.9 214.2L524.52 213.3L525.14 213.3L525.76 213.3L526.38 214.3L527 214.3L527.62 214.3L528.24 214.3L528.86 214.3L529.48 214.3L530.1 214.3L530.72 214.3L531.34 214.3L531.96 214.3L532.58 214.3L533.2 214.3L533.82 214.3L534.44 214.3L535.06 214.3L535.68 213.3L536.3 214.3L536.92 214.3L537.54 214.3L538.16 214.3L538.78 213.3L539.4 213.3L540.02 214.3L540.64 214.3L541.26 214.3L541.88 213.3L542.5 213.3L543.12 213.3L543.74 213.3L544.36 213.3L544.98 212.3L545.6 213.3L545.8 213.8M546.7 127.7L547.4 125.9L548.02 127.2L548.64 127.2L549.26 127.2L549.88 127.2L550.5 128.2L551.12 128.2L551.74 128.2L552.36 127.2L552.98 129.2L553.6 127.2L554.22 128.2L554.84 128.2L555.46 129.2L556.08 128.2L556.7 126.2L557.32 128.2L557.94 128.2L558.56 128.2L559.18 127.2L559.8 128.2L560.42 127.2L561.04 126.2L561.66 128.2L562.28 128.2L562.9 127.2L563.52 127.2L564.14 128.2L564.76 126.2L565.38 128.2L566 128.2L566.62 127.2L567.24 128.2L567.86 128.2L568.48 128.2L569.1 127.2L569.3 127.7M570.2 213.8L570.9 214.2L571.52 214.3L572.14 214.3L572.76 212.3L573.38 212.3L574 213.3L574.62 214.3L575.24 213.3L575.86 214.3L576.48 214.3L577.1 214.3L577.72 213.3L578.34 213.3L578.96 214.3L579.58 212.3L580.2 214.3L580.82 213.3L581.44 214.3L582.06 213.3L582.68 214.3L583.3 213.3L583.92 213.3L584.54 213.3L585.16 213.3L585.78 213.3L586.4 213.3L587.02 213.3L587.64 213.3L588.26 214.3L588.88 213.3L589.5 213.3L590.12 213.3L590.74 213.3L591.36 213.3L591.98 213.3L592.6 213.3L592.81 213.8M593.71 127.7L594.41 125.9L595.03 127.2L595.65 127.2L596.27 127.2L596.89 128.2L597.51 128.2L598.13 127.2L598.75 126.2L599.37 128.2L599.99 128.2L600.61 128.2L601.23 128.2L601.85 128.2L602.47 128.2L603.09 126.2L603.71 128.2L604.33 128.2L604.95 128.2L605.57 127.2L606.19 128.2L606.81 128.2L607.43 128.2L608.05 127.2L608.67 127.2L609.29 128.2L609.91 127.2L610.53 128.2L611.15 128.2L611.77 127.2L612.39 127.2L613.01 127.2L613.63 128.2L614.25 128.2L614.87 128.2L615.49 128.2L616.11 128.2L616.31 127.7M617.21 213.8L617.91 214.2L618.53 214.3L619.15 214.3L619.77 214.3L620.39 212.3L621.01 213.3L621.63 214.3L622.25 214.3L622.87 214.3L623.49 214.3L624.11 214.3L624.73 214.3L625.35 214.3L625.97 214.3L626.59 214.3L627.21 214.3L627.83 214.3L628.45 214.3L629.07 213.3L629.69 214.3L630.31 212.3L630.93 213.3L631.55 213.3L632.17 214.3L632.79 214.3L633.41 213.3L634.03 213.3L634.65 214.3L635.27 214.3L635.89 214.3L636.51 214.3L637.13 214.3L637.75 213.3L638.37 213.3L638.99 213.3L639.61 213.3L639.81 213.8M640.71 127.7L641.41 125.9L642.03 127.2L642.65 127.2L643.27 127.2L643.89 127.2L644.51 127.2L645.13 127.2L645.75 127.2L646.37 128.2L646.99 128.2L647.61 127.2L648.23 127.2L648.85 127.2L649.47 128.2L650.09 128.2L650.71 128.2L651.33 128.2L651.95 128.2L652.57 128.2L653.19 127.2L653.81 126.2L654.43 128.2L655.05 128.2L655.67 128.2L656.29 128.2L656.91 127.2L657.53 127.2L658.15 128.2L658.77 128.2L659.39 128.2L660.01 128.2L660.63 128.2L661.25 128.2L661.87 129.2L662.49 127.2L663.11 128.2L663.31 127.7M664.21 213.8L664.91 213.3L665.53 214.3L666.15 213.3L666.77 214.3L667.39 214.3L668.01 213.3L668.63 214.3L669.25 214.3L669.87 214.3L670.49 212.3L671.11 214.3L671.73 213.3L672.35 214.3L672.97 213.3L673.59 213.3L674.21 213.3L674.83 214.3L675.45 214.3L676.07 214.3L676.69 214.3L677.31 212.3L677.93 214.3L678.55 214.3L679.17 213.3L679.79 213.3L680.41 214.3L681.03 214.3L681.65 214.3L682.27 214.3L682.89 214.3L683.51 213.3L684.13 213.3L684.75 215.3L685.37 214.3L685.99 214.3L686.61 213.3L686.82 213.8M687.72 127.7L688.42 125.9L689.04 127.2L689.66 127.2L690.28 127.2L690.9 127.2L691.52 127.2L692.14 127.2L692.76 127.2L693.38 128.2L694 128.2L694.62 128.2L695.24 128.2L695.86 127.2L696.48 128.2L697.1 128.2L697.72 128.2L698.34 128.2L698.96 128.2L699.58 127.2L700.2 127.2L700.82 128.2L701.44 128.2L702.06 127.2L702.68 128.2L703.3 128.2L703.92 128.2L704.54 128.2L705.16 128.2L705.78 127.2L706.4 127.2L707.02 128.2L707.64 128.2L708.26 127.2L708.88 128.2L709.5 127.2L710.12 128.2L710.32 127.7M711.22 213.8L711.92 214.2L712.54 213.3L713.16 214.3L713.78 212.3L714.4 214.3L715.02 214.3L715.64 214.3L716.26 214.3L716.88 214.3L717.5 214.3L718.12 214.3L718.74 214.3L719.36 213.3L719.98 213.3L720.6 214.3L721.22 213.3L721.84 214.3L722.46 214.3L723.08 214.3L723.7 214.3L724.32 214.3L724.94 214.3L725.56 214.3L726.18 213.3L726.8 214.3L727.42 214.3L728.04 214.3L728.66 213.3L729.28 214.3L729.9 212.3L730.52 213.3L731.14 214.3L731.76 214.3L732.38 215.3L733 214.3L733.62 214.3L733.82 213.8M734.72 127.7L735.42 125.9L736.04 127.2L736.66 127.2L737.28 127.2L737.9 127.2L738.52 127.2L739.14 128.2L739.76 127.2L740.38 128.2L741 128.2L741.62 127.2L742.24 128.2L742.86 127.2L743.48 127.2L744.1 127.2L744.72 127.2L745.34 128.2L745.96 127.2L746.58 128.2L747.2 128.2L747.82 127.2L748.44 128.2L749.06 127.2L749.68 128.2L750.3 128.2L750.92 128.2L751.54 128.2L752.16 128.2L752.78 127.2L753.4 127.2L754.02 128.2L754.64 127.2L755.26 127.2L755.88 127.2L756.5 127.2L757.12 127.2L757.32 127.7M758.22 213.8L758.92 213.3L759.54 214.3L760.16 214.3L760.78 214.3L761.4 214.3L762.02 214.3L762.64 215.3L763.26 214.3L763.88 214.3L764.5 213.3L765.12 213.3L765.74 213.3L766.36 214.3L766.98 213.3L767.6 213.3L768.22 214.3L768.84 213.3L769.46 214.3L770.08 214.3L770.7 215.3L771.32 213.3L771.94 213.3L772.56 214.3L773.18 214.3L773.8 214.3L774.42 213.3L775.04 214.3L775.66 214.3L776.28 213.3L776.9 213.3L777.52 213.3L778.14 215.3L778.76 215.3L779.38 213.3L780 214.3L780.62 213.3L780.83 213.8M781.73 127.7L782.43 127.2L783.05 127.2L783.67 127.2L784.29 127.2L784.91 128.2L785.53 129.2L786.15 128.2L786.77 128.2L787.39 127.2L788.01 127.2L788.63 127.2L789.25 127.2L789.87 128.2L790.49 128.2L791.11 127.2L791.73 128.2L792.35 127.2L792.97 127.2L793.59 128.2L794.21 127.2L794.83 127.2L795.45 128.2L796.07 127.2L796.69 129.2L797.31 127.2L797.93 127.2L798.55 128.2L799.17 127.2L799.79 128.2L800.41 128.2L801.03 127.2L801.65 128.2L802.27 128.2L802.89 128.2L803.51 128.2L804.13 127.2L804.33 127.7M805.23 213.8L805.93 214.2L806.55 215.3L807.17 213.3L807.79 213.3L808.41 213.3L809.03 215.3L809.65 213.3L810.27 214.3L810.89 214.3L811.51 213.3L812.13 214.3L812.75 214.3L813.37 213.3L813.99 214.3L814.61 213.3L815.23 214.3L815.85 214.3L816.47 214.3L817.09 213.3L817.71 214.3L818.33 214.3L818.95 213.3L819.57 215.3L820.19 214.3L820.81 214.3L821.43 214.3L822.05 213.3L822.67 213.3L823.29 213.3L823.91 215.3L824.53 213.3L825.15 214.3L825.77 214.3L826.39 213.3L827.01 214.3L827.63 214.3L827.83 213.8M828.73 127.7L829.43 127.2L830.05 127.2L830.67 127.2L831.29 127.2L831.91 127.2L832.53 127.2L833.15 127.2L833.77 128.2L834.39 128.2L835.01 128.2L835.63 128.2L836.25 129.2L836.87 127.2L837.49 127.2L838.11 128.2L838.73 128.2L839.35 128.2L839.97 128.2L840.59 128.2L841.21 128.2L841.83 127.2L842.45 127.2L843.07 127.2L843.69 128.2L844.31 127.2L844.93 127.2L845.55 127.2L846.17 128.2L846.79 128.2L847.41 127.2L848.03 129.2L848.65 128.2L849.27 127.2L849.89 128.2L850.51 128.2L851.13 127.2L851.33 127.7M852.23 213.8L852.93 214.2L853.55 214.3L854.17 213.3L854.79 212.3L855.41 214.3L856.03 214.3L856.65 213.3L857.27 213.3L857.89 213.3L858.51 214.3L859.13 213.3L859.75 214.3L860.37 214.3L860.99 214.3L861.61 213.3L862.23 213.3L862.85 213.3L863.47 214.3L864.09 214.3L864.71 214.3L865.33 214.3L865.95 215.3L866.57 214.3L867.19 214.3L867.81 214.3L868.43 213.3L869.05 212.3L869.67 213.3L870.29 214.3L870.91 214.3L871.53 214.3L872.15 214.3L872.77 214.3L873.39 213.3L874.01 214.3L874.63 213.3L874.84 213.8M875.74 127.7L876.44 125.9L877.06 127.2L877.68 127.2L878.3 127.2L878.92 127.2L879.54 128.2L880.16 127.2L880.78 128.2L881.4 128.2L882.02 127.2L882.64 128.2L883.26 128.2L883.88 128.2L884.5 127.2L885.12 127.2L885.74 127.2L886.36 128.2L886.98 127.2L887.6 127.2L888.22 127.2L888.84 128.2L889.46 128.2L890.08 128.2L890.7 128.2L891.32 128.2L891.94 128.2L892.56 128.2L893.18 128.2L893.8 127.2L894.42 128.2L895.04 128.2L895.66 129.2L896.28 127.2L896.9 127.2L897.52 127.2L898.14 128.2L898.34 127.7M899.24 213.8L899.94 214.2L900.56 213.3L901.18 214.3L901.8 214.3L902.42 214.3L903.04 214.3L903.66 213.3L904.28 213.3L904.9 213.3L905.52 214.3L906.14 212.3L906.76 213.3L907.38 213.3L908 213.3L908.62 214.3L909.24 214.3L909.86 214.3L910.48 214.3L911.1 213.3L911.72 213.3L912.34 213.3L912.96 213.3L913.58 214.3L914.2 214.3L914.82 214.3L915.44 214.3L916.06 214.3L916.68 213.3L917.3 212.3L917.92 214.3L918.54 213.3L919.16 213.3L919.78 213.3L920.4 213.3L921.02 213.3L921.64 213.3L921.84 213.8M922.74 127.7L923.44 125.9L924.06 127.2L924.68 127.2L925.3 127.2L925.92 127.2L926.54 127.2L927.16 128.2L927.78 128.2L928.4 128.2L929.02 129.2L929.64 128.2L930.26 127.2L930.88 127.2L931.5 127.2L932.12 127.2L932.74 127.2L933.36 127.2L933.98 127.2L934.6 128.2L935.22 128.2L935.84 127.2L936.46 127.2L937.08 127.2L937.7 127.2L938.32 128.2L938.94 128.2L939.56 128.2L940.18 127.2L940.8 129.2L941.42 127.2L942.04 127.2L942.66 128.2L943.28 126.2L943.9 127.2L944.52 127.2L945.14 127.2L945.34 127.7M946.24 213.8L946.94 213.3L947.56 213.3L948.18 213.3L948.8 214.3L949.42 214.3L950.04 214.3L950.66 213.3L951.28 213.3L951.9 214.3L952.52 213.3L953.14 213.3L953.76 213.3L954.38 213.3L955 213.3L955.62 213.3L956.24 214.3L956.86 214.3L957.48 214.3L958.1 213.3L958.72 213.3L959.34 214.3L959.96 214.3L960.58 213.3L961.2 213.3L961.82 212.3L962.44 214.3L963.06 213.3L963.68 213.3L964.3 214.3L964.92 214.3L965.54 213.3L966.16 215.3L966.78 213.3L967.4 213.3L968.02 212.3L968.64 213.3L968.85 213.8M969.75 127.7L970.45 125.9L971.07 127.2L971.69 127.2L972.31 127.2L972.93 127.2L973.55 128.2L974.17 128.2L974.79 128.2L975.41 128.2L976.03 128.2L976.65 128.2L977.27 129.2L977.89 127.2L978.51 128.2L979.13 127.2L979.75 128.2L980.37 128.2L980.99 128.2L981.61 128.2L982.23 128.2L982.85 127.2L983.47 127.2L984.09 127.2L984.71 128.2L985.33 128.2L985.95 128.2L986.57 128.2L987.19 128.2L987.81 128.2L988.43 126.2L989.05 126.2L989.67 127.2L990.29 128.2L990.91 128.2L991.53 128.2L992.6 127.7" fill="none" stroke="#3aec3a" stroke-width="1.5" stroke-linejoin="miter" stroke-linecap="square"/>
<path d="M52.7 309.5V341.3" stroke="#f4f420" stroke-width="1.4" fill="none"/>
<path d="M75.75 306.2L76.65 341M122.75 306.2L123.66 341M216.77 306.2L217.66 341M263.77 306.2L264.67 341M310.78 306.2L311.68 341M357.78 306.2L358.68 341M498.8 306.2L499.69 341M545.8 306.2L546.7 341M592.81 306.2L593.71 341M639.81 306.2L640.71 341M686.82 306.2L687.72 341M733.82 306.2L734.72 341M780.83 306.2L781.73 341M874.84 306.2L875.74 341M921.84 306.2L922.74 341M968.85 306.2L969.75 341" stroke="#a8a814" stroke-width="1.1" fill="none"/>
<path d="M75.75 306.2L76.1 319.74M76.52 335.78L76.65 341M99.25 341L100.15 306.2M122.75 306.2L123.11 319.83M146.26 341L147.16 306.2M169.76 306.2L170.66 341M193.26 341L194.16 306.2M216.77 306.2L217.06 317.68M240.27 341L241.17 306.2M263.77 306.2L264.14 320.54M264.54 335.78L264.67 341M287.27 341L288.17 306.2M310.78 306.2L311.1 318.95M334.28 341L335.18 306.2M358.32 327.08L358.66 340.14M381.28 341L382.18 306.2M404.79 306.2L405.69 341M428.29 341L429.19 306.2M451.79 306.2L452.69 341M475.29 341L476.19 306.2M499.2 321.86L499.6 337.17M522.3 341L523.2 306.2M546.21 321.86L546.61 337.62M569.3 341L570.2 306.2M593.21 321.86L593.65 339.06M616.31 341L617.21 306.2M639.81 306.2L640.13 318.75M640.58 335.78L640.71 341M663.31 341L664.21 306.2M687.22 321.86L687.56 335.2M710.32 341L711.22 306.2M734.23 321.86L734.57 335.02M757.32 341L758.22 306.2M781.37 327.08L781.72 340.95M804.33 341L805.23 306.2M827.83 306.2L828.73 341M851.33 341L852.23 306.2M874.84 306.2L875.16 318.86M898.34 341L899.24 306.2M922.25 321.86L922.6 335.56M945.34 341L946.24 306.2M968.85 306.2L969.13 317.13" stroke="#f4f420" stroke-width="1.1" fill="none"/>
<path d="M52.5 306.2L53.2 304.4L53.82 305.7L54.44 305.7L55.06 305.7L55.68 305.7L56.3 306.6L56.92 306.6L57.54 306.6L58.16 306.6L58.78 305.7L59.4 305.7L60.02 305.7L60.64 306.6L61.26 306.6L61.88 304.8L62.5 306.6L63.12 305.7L63.74 306.6L64.36 306.6L64.98 307.5L65.6 306.6L66.22 306.6L66.84 305.7L67.46 305.7L68.08 305.7L68.7 306.6L69.32 306.6L69.94 306.6L70.56 306.6L71.18 306.6L71.8 306.6L72.42 306.6L73.04 306.6L73.66 306.6L74.28 306.6L74.9 305.7L75.52 305.7L75.75 306.2M76.65 341L77.35 341.4L77.97 340.5L78.59 340.5L79.21 341.4L79.83 340.5L80.45 341.4L81.07 340.5L81.69 340.5L82.31 341.4L82.93 341.4L83.55 341.4L84.17 340.5L84.79 341.4L85.41 341.4L86.03 340.5L86.65 340.5L87.27 341.4L87.89 342.3L88.51 340.5L89.13 339.6L89.75 340.5L90.37 341.4L90.99 341.4L91.61 341.4L92.23 341.4L92.85 341.4L93.47 340.5L94.09 340.5L94.71 342.3L95.33 341.4L95.95 341.4L96.57 341.4L97.19 341.4L97.81 340.5L98.43 341.4L99.05 341.4L99.25 341M100.15 306.2L100.85 305.7L101.47 305.7L102.09 305.7L102.71 305.7L103.33 305.7L103.95 306.6L104.57 305.7L105.19 305.7L105.81 305.7L106.43 305.7L107.05 305.7L107.67 305.7L108.29 305.7L108.91 306.6L109.53 306.6L110.15 306.6L110.77 306.6L111.39 305.7L112.01 305.7L112.63 305.7L113.25 306.6L113.87 305.7L114.49 305.7L115.11 305.7L115.73 307.5L116.35 306.6L116.97 305.7L117.59 306.6L118.21 305.7L118.83 306.6L119.45 305.7L120.07 306.6L120.69 305.7L121.31 305.7L121.93 306.6L122.55 306.6L122.75 306.2M123.66 341L124.36 340.5L124.98 341.4L125.6 341.4L126.22 341.4L126.84 340.5L127.46 340.5L128.08 339.6L128.7 340.5L129.32 340.5L129.94 340.5L130.56 342.3L131.18 341.4L131.8 342.3L132.42 340.5L133.04 340.5L133.66 340.5L134.28 339.6L134.9 340.5L135.52 340.5L136.14 341.4L136.76 341.4L137.38 341.4L138 341.4L138.62 341.4L139.24 341.4L139.86 341.4L140.48 341.4L141.1 341.4L141.72 341.4L142.34 341.4L142.96 340.5L143.58 341.4L144.2 340.5L144.82 341.4L145.44 341.4L146.06 341.4L146.26 341M147.16 306.2L147.86 304.4L148.48 305.7L149.1 305.7L149.72 305.7L150.34 304.8L150.96 306.6L151.58 305.7L152.2 305.7L152.82 306.6L153.44 306.6L154.06 306.6L154.68 306.6L155.3 306.6L155.92 306.6L156.54 305.7L157.16 306.6L157.78 305.7L158.4 306.6L159.02 306.6L159.64 306.6L160.26 305.7L160.88 307.5L161.5 305.7L162.12 305.7L162.74 306.6L163.36 306.6L163.98 306.6L164.6 305.7L165.22 307.5L165.84 305.7L166.46 305.7L167.08 305.7L167.7 305.7L168.32 306.6L168.94 306.6L169.56 305.7L169.76 306.2M170.66 341L171.36 341.4L171.98 341.4L172.6 341.4L173.22 340.5L173.84 340.5L174.46 341.4L175.08 341.4L175.7 341.4L176.32 341.4L176.94 341.4L177.56 341.4L178.18 341.4L178.8 341.4L179.42 341.4L180.04 341.4L180.66 340.5L181.28 340.5L181.9 340.5L182.52 340.5L183.14 340.5L183.76 340.5L184.38 341.4L185 341.4L185.62 341.4L186.24 341.4L186.86 341.4L187.48 341.4L188.1 339.6L188.72 340.5L189.34 340.5L189.96 341.4L190.58 339.6L191.2 341.4L191.82 341.4L192.44 340.5L193.06 340.5L193.26 341M194.16 306.2L194.86 304.4L195.48 305.7L196.1 305.7L196.72 305.7L197.34 306.6L197.96 307.5L198.58 305.7L199.2 305.7L199.82 306.6L200.44 306.6L201.06 306.6L201.68 306.6L202.3 306.6L202.92 305.7L203.54 305.7L204.16 305.7L204.78 305.7L205.4 305.7L206.02 305.7L206.64 304.8L207.26 306.6L207.88 305.7L208.5 305.7L209.12 305.7L209.74 305.7L210.36 305.7L210.98 305.7L211.6 305.7L212.22 305.7L212.84 305.7L213.46 305.7L214.08 304.8L214.7 306.6L215.32 305.7L215.94 305.7L216.56 305.7L216.77 306.2M217.66 341L218.36 341.4L218.98 340.5L219.6 341.4L220.22 340.5L220.84 341.4L221.47 341.4L222.09 341.4L222.71 341.4L223.33 341.4L223.95 340.5L224.57 341.4L225.19 340.5L225.81 340.5L226.43 341.4L227.05 340.5L227.67 341.4L228.29 342.3L228.91 341.4L229.53 342.3L230.15 341.4L230.77 341.4L231.39 341.4L232.01 341.4L232.63 341.4L233.25 340.5L233.87 340.5L234.49 340.5L235.11 340.5L235.73 340.5L236.35 341.4L236.97 341.4L237.59 341.4L238.21 341.4L238.83 341.4L239.45 340.5L240.07 341.4L240.27 341M241.17 306.2L241.87 305.7L242.49 305.7L243.11 305.7L243.73 305.7L244.35 305.7L244.97 306.6L245.59 305.7L246.21 305.7L246.83 305.7L247.45 305.7L248.07 305.7L248.69 305.7L249.31 305.7L249.93 305.7L250.55 306.6L251.17 305.7L251.79 305.7L252.41 307.5L253.03 305.7L253.65 306.6L254.27 306.6L254.89 304.8L255.51 306.6L256.13 305.7L256.75 305.7L257.37 305.7L257.99 306.6L258.61 306.6L259.23 306.6L259.85 305.7L260.47 305.7L261.09 305.7L261.71 305.7L262.33 305.7L262.95 306.6L263.57 305.7L263.77 306.2M264.67 341L265.37 341.4L265.99 341.4L266.61 341.4L267.23 341.4L267.85 340.5L268.47 341.4L269.09 341.4L269.71 341.4L270.33 341.4L270.95 340.5L271.57 341.4L272.19 341.4L272.81 342.3L273.43 340.5L274.05 342.3L274.67 341.4L275.29 340.5L275.91 340.5L276.53 341.4L277.15 341.4L277.77 341.4L278.39 341.4L279.01 340.5L279.63 340.5L280.25 341.4L280.87 341.4L281.49 341.4L282.11 340.5L282.73 340.5L283.35 340.5L283.97 341.4L284.59 340.5L285.21 342.3L285.83 340.5L286.45 341.4L287.07 341.4L287.27 341M288.17 306.2L288.87 304.4L289.49 305.7L290.11 305.7L290.73 305.7L291.35 306.6L291.97 306.6L292.59 306.6L293.21 305.7L293.83 305.7L294.45 305.7L295.07 305.7L295.69 305.7L296.31 306.6L296.93 306.6L297.55 305.7L298.17 306.6L298.79 305.7L299.41 305.7L300.03 305.7L300.65 306.6L301.27 305.7L301.89 306.6L302.51 306.6L303.13 305.7L303.75 305.7L304.37 305.7L304.99 306.6L305.61 305.7L306.23 305.7L306.85 306.6L307.47 305.7L308.09 306.6L308.71 305.7L309.33 305.7L309.95 306.6L310.57 306.6L310.78 306.2M311.68 341L312.38 341.4L313 340.5L313.62 341.4L314.24 341.4L314.86 341.4L315.48 340.5L316.1 341.4L316.72 341.4L317.34 341.4L317.96 341.4L318.58 341.4L319.2 341.4L319.82 341.4L320.44 341.4L321.06 340.5L321.68 340.5L322.3 342.3L322.92 340.5L323.54 341.4L324.16 341.4L324.78 340.5L325.4 341.4L326.02 341.4L326.64 340.5L327.26 339.6L327.88 341.4L328.5 341.4L329.12 341.4L329.74 341.4L330.36 340.5L330.98 340.5L331.6 341.4L332.22 341.4L332.84 341.4L333.46 341.4L334.08 341.4L334.28 341M335.18 306.2L335.88 304.4L336.5 305.7L337.12 305.7L337.74 305.7L338.36 304.8L338.98 305.7L339.6 305.7L340.22 306.6L340.84 306.6L341.46 305.7L342.08 306.6L342.7 305.7L343.32 306.6L343.94 305.7L344.56 306.6L345.18 306.6L345.8 306.6L346.42 306.6L347.04 306.6L347.66 305.7L348.28 306.6L348.9 305.7L349.52 305.7L350.14 305.7L350.76 305.7L351.38 305.7L352 306.6L352.62 305.7L353.24 306.6L353.86 306.6L354.48 306.6L355.1 305.7L355.72 305.7L356.34 306.6L356.96 306.6L357.58 305.7L357.78 306.2M358.68 341L359.38 341.4L360 340.5L360.62 342.3L361.24 341.4L361.86 341.4L362.48 340.5L363.1 341.4L363.72 340.5L364.34 340.5L364.96 340.5L365.58 340.5L366.2 341.4L366.82 341.4L367.44 340.5L368.06 340.5L368.68 340.5L369.3 341.4L369.92 341.4L370.54 340.5L371.16 340.5L371.78 340.5L372.4 340.5L373.02 341.4L373.64 340.5L374.26 341.4L374.88 341.4L375.5 341.4L376.12 340.5L376.74 341.4L377.36 341.4L377.98 340.5L378.6 341.4L379.22 341.4L379.84 341.4L380.46 342.3L381.08 340.5L381.28 341M382.18 306.2L382.88 304.4L383.5 305.7L384.12 305.7L384.74 305.7L385.36 305.7L385.98 306.6L386.6 306.6L387.22 306.6L387.84 305.7L388.46 305.7L389.08 306.6L389.7 306.6L390.32 306.6L390.94 306.6L391.56 306.6L392.18 305.7L392.8 306.6L393.42 306.6L394.04 306.6L394.66 305.7L395.28 304.8L395.9 306.6L396.52 306.6L397.14 307.5L397.76 305.7L398.38 306.6L399 306.6L399.62 305.7L400.24 305.7L400.86 305.7L401.48 305.7L402.1 305.7L402.72 305.7L403.34 305.7L403.96 305.7L404.58 306.6L404.79 306.2M405.69 341L406.38 341.4L407 341.4L407.62 341.4L408.25 340.5L408.87 340.5L409.49 341.4L410.11 340.5L410.73 340.5L411.35 339.6L411.97 340.5L412.59 340.5L413.21 340.5L413.83 341.4L414.45 340.5L415.07 342.3L415.69 341.4L416.31 340.5L416.93 341.4L417.55 341.4L418.17 340.5L418.79 340.5L419.41 341.4L420.03 341.4L420.65 341.4L421.27 340.5L421.89 341.4L422.51 341.4L423.13 340.5L423.75 339.6L424.37 340.5L424.99 340.5L425.61 340.5L426.23 340.5L426.85 340.5L427.47 340.5L428.09 340.5L428.29 341M429.19 306.2L429.89 305.7L430.51 305.7L431.13 305.7L431.75 305.7L432.37 306.6L432.99 306.6L433.61 306.6L434.23 305.7L434.85 305.7L435.47 306.6L436.09 306.6L436.71 305.7L437.33 305.7L437.95 305.7L438.57 306.6L439.19 306.6L439.81 306.6L440.43 305.7L441.05 305.7L441.67 305.7L442.29 305.7L442.91 307.5L443.53 306.6L444.15 305.7L444.77 305.7L445.39 306.6L446.01 306.6L446.63 305.7L447.25 306.6L447.87 306.6L448.49 306.6L449.11 306.6L449.73 306.6L450.35 306.6L450.97 306.6L451.59 306.6L451.79 306.2M452.69 341L453.39 341.4L454.01 340.5L454.63 340.5L455.25 340.5L455.87 340.5L456.49 340.5L457.11 341.4L457.73 341.4L458.35 340.5L458.97 339.6L459.59 340.5L460.21 339.6L460.83 340.5L461.45 340.5L462.07 341.4L462.69 341.4L463.31 340.5L463.93 340.5L464.55 340.5L465.17 339.6L465.79 340.5L466.41 340.5L467.03 340.5L467.65 341.4L468.27 341.4L468.89 341.4L469.51 341.4L470.13 340.5L470.75 340.5L471.37 340.5L471.99 340.5L472.61 341.4L473.23 341.4L473.85 340.5L474.47 341.4L475.09 341.4L475.29 341M476.19 306.2L476.89 305.7L477.51 305.7L478.13 305.7L478.75 305.7L479.37 306.6L479.99 306.6L480.61 306.6L481.23 306.6L481.85 305.7L482.47 306.6L483.09 305.7L483.71 305.7L484.33 305.7L484.95 305.7L485.57 305.7L486.19 307.5L486.81 305.7L487.43 305.7L488.05 306.6L488.67 306.6L489.29 306.6L489.91 306.6L490.53 305.7L491.15 305.7L491.77 304.8L492.39 305.7L493.01 306.6L493.63 305.7L494.25 305.7L494.87 306.6L495.49 306.6L496.11 305.7L496.73 307.5L497.35 306.6L497.97 306.6L498.59 306.6L498.8 306.2M499.69 341L500.39 340.5L501.01 341.4L501.63 341.4L502.25 341.4L502.88 341.4L503.5 340.5L504.12 341.4L504.74 341.4L505.36 341.4L505.98 340.5L506.6 341.4L507.22 340.5L507.84 340.5L508.46 340.5L509.08 340.5L509.7 340.5L510.32 340.5L510.94 340.5L511.56 339.6L512.18 340.5L512.8 340.5L513.42 340.5L514.04 340.5L514.66 340.5L515.28 340.5L515.9 340.5L516.52 341.4L517.14 340.5L517.76 340.5L518.38 340.5L519 340.5L519.62 340.5L520.24 340.5L520.86 340.5L521.48 341.4L522.1 340.5L522.3 341M523.2 306.2L523.9 304.4L524.52 305.7L525.14 305.7L525.76 305.7L526.38 305.7L527 306.6L527.62 305.7L528.24 305.7L528.86 306.6L529.48 305.7L530.1 305.7L530.72 306.6L531.34 305.7L531.96 305.7L532.58 306.6L533.2 305.7L533.82 305.7L534.44 305.7L535.06 306.6L535.68 305.7L536.3 304.8L536.92 304.8L537.54 306.6L538.16 306.6L538.78 305.7L539.4 305.7L540.02 306.6L540.64 305.7L541.26 305.7L541.88 305.7L542.5 306.6L543.12 306.6L543.74 305.7L544.36 306.6L544.98 306.6L545.6 306.6L545.8 306.2M546.7 341L547.4 340.5L548.02 340.5L548.64 341.4L549.26 341.4L549.88 340.5L550.5 340.5L551.12 340.5L551.74 341.4L552.36 341.4L552.98 341.4L553.6 341.4L554.22 341.4L554.84 341.4L555.46 340.5L556.08 341.4L556.7 341.4L557.32 340.5L557.94 340.5L558.56 342.3L559.18 341.4L559.8 341.4L560.42 341.4L561.04 341.4L561.66 340.5L562.28 341.4L562.9 339.6L563.52 341.4L564.14 340.5L564.76 340.5L565.38 341.4L566 340.5L566.62 341.4L567.24 341.4L567.86 341.4L568.48 341.4L569.1 341.4L569.3 341M570.2 306.2L570.9 304.4L571.52 305.7L572.14 305.7L572.76 305.7L573.38 305.7L574 305.7L574.62 305.7L575.24 306.6L575.86 306.6L576.48 306.6L577.1 305.7L577.72 305.7L578.34 305.7L578.96 305.7L579.58 305.7L580.2 305.7L580.82 305.7L581.44 306.6L582.06 306.6L582.68 306.6L583.3 306.6L583.92 306.6L584.54 305.7L585.16 305.7L585.78 305.7L586.4 305.7L587.02 306.6L587.64 306.6L588.26 305.7L588.88 306.6L589.5 306.6L590.12 307.5L590.74 306.6L591.36 306.6L591.98 306.6L592.6 305.7L592.81 306.2M593.71 341L594.41 341.4L595.03 341.4L595.65 340.5L596.27 340.5L596.89 340.5L597.51 341.4L598.13 340.5L598.75 340.5L599.37 340.5L599.99 340.5L600.61 341.4L601.23 341.4L601.85 340.5L602.47 340.5L603.09 340.5L603.71 340.5L604.33 341.4L604.95 341.4L605.57 341.4L606.19 341.4L606.81 341.4L607.43 341.4L608.05 340.5L608.67 341.4L609.29 341.4L609.91 341.4L610.53 340.5L611.15 341.4L611.77 340.5L612.39 341.4L613.01 340.5L613.63 340.5L614.25 340.5L614.87 340.5L615.49 340.5L616.11 340.5L616.31 341M617.21 306.2L617.91 305.7L618.53 305.7L619.15 305.7L619.77 305.7L620.39 306.6L621.01 305.7L621.63 306.6L622.25 306.6L622.87 305.7L623.49 307.5L624.11 306.6L624.73 306.6L625.35 306.6L625.97 307.5L626.59 306.6L627.21 306.6L627.83 306.6L628.45 306.6L629.07 306.6L629.69 305.7L630.31 306.6L630.93 305.7L631.55 305.7L632.17 306.6L632.79 305.7L633.41 305.7L634.03 306.6L634.65 305.7L635.27 305.7L635.89 304.8L636.51 306.6L637.13 306.6L637.75 306.6L638.37 305.7L638.99 306.6L639.61 306.6L639.81 306.2M640.71 341L641.41 341.4L642.03 340.5L642.65 340.5L643.27 340.5L643.89 341.4L644.51 339.6L645.13 341.4L645.75 340.5L646.37 340.5L646.99 341.4L647.61 341.4L648.23 341.4L648.85 341.4L649.47 340.5L650.09 341.4L650.71 340.5L651.33 340.5L651.95 340.5L652.57 340.5L653.19 340.5L653.81 340.5L654.43 341.4L655.05 341.4L655.67 339.6L656.29 341.4L656.91 340.5L657.53 340.5L658.15 340.5L658.77 340.5L659.39 339.6L660.01 340.5L660.63 340.5L661.25 342.3L661.87 341.4L662.49 340.5L663.11 340.5L663.31 341M664.21 306.2L664.91 304.4L665.53 305.7L666.15 305.7L666.77 305.7L667.39 306.6L668.01 305.7L668.63 305.7L669.25 306.6L669.87 305.7L670.49 306.6L671.11 305.7L671.73 305.7L672.35 306.6L672.97 306.6L673.59 306.6L674.21 306.6L674.83 306.6L675.45 306.6L676.07 306.6L676.69 306.6L677.31 305.7L677.93 305.7L678.55 306.6L679.17 306.6L679.79 305.7L680.41 305.7L681.03 305.7L681.65 306.6L682.27 306.6L682.89 306.6L683.51 304.8L684.13 306.6L684.75 306.6L685.37 305.7L685.99 306.6L686.61 306.6L686.82 306.2M687.72 341L688.42 341.4L689.04 340.5L689.66 340.5L690.28 341.4L690.9 340.5L691.52 340.5L692.14 340.5L692.76 341.4L693.38 340.5L694 341.4L694.62 339.6L695.24 341.4L695.86 341.4L696.48 341.4L697.1 341.4L697.72 341.4L698.34 341.4L698.96 341.4L699.58 340.5L700.2 341.4L700.82 341.4L701.44 341.4L702.06 341.4L702.68 341.4L703.3 341.4L703.92 340.5L704.54 341.4L705.16 341.4L705.78 340.5L706.4 341.4L707.02 341.4L707.64 341.4L708.26 341.4L708.88 341.4L709.5 341.4L710.12 340.5L710.32 341M711.22 306.2L711.92 305.7L712.54 305.7L713.16 305.7L713.78 305.7L714.4 305.7L715.02 306.6L715.64 304.8L716.26 305.7L716.88 305.7L717.5 305.7L718.12 306.6L718.74 306.6L719.36 305.7L719.98 306.6L720.6 306.6L721.22 306.6L721.84 306.6L722.46 306.6L723.08 305.7L723.7 305.7L724.32 306.6L724.94 306.6L725.56 306.6L726.18 305.7L726.8 304.8L727.42 306.6L728.04 306.6L728.66 304.8L729.28 305.7L729.9 306.6L730.52 304.8L731.14 306.6L731.76 305.7L732.38 305.7L733 305.7L733.62 305.7L733.82 306.2M734.72 341L735.42 340.5L736.04 339.6L736.66 340.5L737.28 340.5L737.9 341.4L738.52 340.5L739.14 341.4L739.76 340.5L740.38 342.3L741 340.5L741.62 341.4L742.24 340.5L742.86 340.5L743.48 340.5L744.1 340.5L744.72 341.4L745.34 341.4L745.96 340.5L746.58 340.5L747.2 340.5L747.82 340.5L748.44 341.4L749.06 341.4L749.68 341.4L750.3 341.4L750.92 341.4L751.54 341.4L752.16 340.5L752.78 340.5L753.4 341.4L754.02 339.6L754.64 341.4L755.26 340.5L755.88 341.4L756.5 341.4L757.12 341.4L757.32 341M758.22 306.2L758.92 305.7L759.54 305.7L760.16 305.7L760.78 305.7L761.4 305.7L762.02 305.7L762.64 306.6L763.26 305.7L763.88 305.7L764.5 306.6L765.12 306.6L765.74 306.6L766.36 304.8L766.98 305.7L767.6 306.6L768.22 306.6L768.84 306.6L769.46 305.7L770.08 305.7L770.7 305.7L771.32 305.7L771.94 306.6L772.56 306.6L773.18 306.6L773.8 305.7L774.42 306.6L775.04 305.7L775.66 305.7L776.28 305.7L776.9 306.6L777.52 305.7L778.14 305.7L778.76 305.7L779.38 306.6L780 305.7L780.62 306.6L780.83 306.2M781.73 341L782.43 341.4L783.05 341.4L783.67 341.4L784.29 340.5L784.91 341.4L785.53 341.4L786.15 341.4L786.77 340.5L787.39 340.5L788.01 341.4L788.63 341.4L789.25 341.4L789.87 340.5L790.49 340.5L791.11 340.5L791.73 340.5L792.35 341.4L792.97 341.4L793.59 340.5L794.21 341.4L794.83 340.5L795.45 340.5L796.07 340.5L796.69 340.5L797.31 341.4L797.93 341.4L798.55 340.5L799.17 340.5L799.79 340.5L800.41 341.4L801.03 340.5L801.65 341.4L802.27 341.4L802.89 341.4L803.51 341.4L804.13 339.6L804.33 341M805.23 306.2L805.93 305.7L806.55 305.7L807.17 305.7L807.79 305.7L808.41 306.6L809.03 306.6L809.65 306.6L810.27 306.6L810.89 306.6L811.51 306.6L812.13 306.6L812.75 305.7L813.37 305.7L813.99 306.6L814.61 305.7L815.23 306.6L815.85 306.6L816.47 305.7L817.09 304.8L817.71 305.7L818.33 306.6L818.95 306.6L819.57 305.7L820.19 305.7L820.81 305.7L821.43 306.6L822.05 306.6L822.67 305.7L823.29 304.8L823.91 306.6L824.53 306.6L825.15 306.6L825.77 306.6L826.39 306.6L827.01 305.7L827.63 305.7L827.83 306.2M828.73 341L829.43 341.4L830.05 340.5L830.67 340.5L831.29 341.4L831.91 341.4L832.53 340.5L833.15 340.5L833.77 341.4L834.39 341.4L835.01 341.4L835.63 341.4L836.25 341.4L836.87 341.4L837.49 340.5L838.11 341.4L838.73 341.4L839.35 341.4L839.97 340.5L840.59 340.5L841.21 340.5L841.83 340.5L842.45 340.5L843.07 341.4L843.69 341.4L844.31 341.4L844.93 341.4L845.55 342.3L846.17 340.5L846.79 341.4L847.41 340.5L848.03 340.5L848.65 340.5L849.27 340.5L849.89 340.5L850.51 341.4L851.13 341.4L851.33 341M852.23 306.2L852.93 305.7L853.55 305.7L854.17 305.7L854.79 305.7L855.41 306.6L856.03 306.6L856.65 306.6L857.27 305.7L857.89 306.6L858.51 307.5L859.13 306.6L859.75 306.6L860.37 305.7L860.99 305.7L861.61 305.7L862.23 305.7L862.85 306.6L863.47 306.6L864.09 305.7L864.71 306.6L865.33 305.7L865.95 305.7L866.57 305.7L867.19 305.7L867.81 306.6L868.43 305.7L869.05 306.6L869.67 307.5L870.29 306.6L870.91 305.7L871.53 306.6L872.15 305.7L872.77 306.6L873.39 305.7L874.01 305.7L874.63 305.7L874.84 306.2M875.74 341L876.44 340.5L877.06 341.4L877.68 340.5L878.3 340.5L878.92 341.4L879.54 341.4L880.16 341.4L880.78 341.4L881.4 341.4L882.02 341.4L882.64 341.4L883.26 340.5L883.88 340.5L884.5 341.4L885.12 341.4L885.74 340.5L886.36 340.5L886.98 341.4L887.6 340.5L888.22 340.5L888.84 340.5L889.46 341.4L890.08 340.5L890.7 340.5L891.32 340.5L891.94 341.4L892.56 341.4L893.18 341.4L893.8 341.4L894.42 340.5L895.04 340.5L895.66 340.5L896.28 340.5L896.9 341.4L897.52 341.4L898.14 340.5L898.34 341M899.24 306.2L899.94 304.4L900.56 305.7L901.18 305.7L901.8 305.7L902.42 305.7L903.04 305.7L903.66 306.6L904.28 306.6L904.9 306.6L905.52 305.7L906.14 306.6L906.76 305.7L907.38 306.6L908 306.6L908.62 306.6L909.24 306.6L909.86 306.6L910.48 306.6L911.1 305.7L911.72 306.6L912.34 305.7L912.96 305.7L913.58 305.7L914.2 305.7L914.82 305.7L915.44 305.7L916.06 305.7L916.68 306.6L917.3 305.7L917.92 306.6L918.54 305.7L919.16 305.7L919.78 305.7L920.4 305.7L921.02 306.6L921.64 306.6L921.84 306.2M922.74 341L923.44 341.4L924.06 340.5L924.68 341.4L925.3 340.5L925.92 340.5L926.54 340.5L927.16 340.5L927.78 340.5L928.4 340.5L929.02 340.5L929.64 341.4L930.26 341.4L930.88 341.4L931.5 340.5L932.12 340.5L932.74 340.5L933.36 340.5L933.98 341.4L934.6 341.4L935.22 341.4L935.84 340.5L936.46 340.5L937.08 340.5L937.7 340.5L938.32 340.5L938.94 340.5L939.56 340.5L940.18 340.5L940.8 340.5L941.42 340.5L942.04 340.5L942.66 341.4L943.28 341.4L943.9 340.5L944.52 340.5L945.14 340.5L945.34 341M946.24 306.2L946.94 304.4L947.56 305.7L948.18 305.7L948.8 305.7L949.42 306.6L950.04 305.7L950.66 305.7L951.28 305.7L951.9 307.5L952.52 306.6L953.14 306.6L953.76 306.6L954.38 305.7L955 306.6L955.62 306.6L956.24 305.7L956.86 306.6L957.48 306.6L958.1 306.6L958.72 306.6L959.34 306.6L959.96 306.6L960.58 305.7L961.2 305.7L961.82 306.6L962.44 305.7L963.06 305.7L963.68 306.6L964.3 304.8L964.92 305.7L965.54 305.7L966.16 305.7L966.78 305.7L967.4 306.6L968.02 306.6L968.64 306.6L968.85 306.2M969.75 341L970.45 341.4L971.07 340.5L971.69 340.5L972.31 340.5L972.93 340.5L973.55 341.4L974.17 341.4L974.79 340.5L975.41 341.4L976.03 341.4L976.65 341.4L977.27 342.3L977.89 340.5L978.51 340.5L979.13 340.5L979.75 339.6L980.37 341.4L980.99 340.5L981.61 340.5L982.23 341.4L982.85 340.5L983.47 341.4L984.09 340.5L984.71 339.6L985.33 340.5L985.95 340.5L986.57 340.5L987.19 340.5L987.81 340.5L988.43 340.5L989.05 341.4L989.67 341.4L990.29 340.5L990.91 340.5L991.53 340.5L992.6 341" fill="none" stroke="#f4f420" stroke-width="1.5" stroke-linejoin="miter" stroke-linecap="square"/>
<!-- cursor labels -->
<text class="wide" transform="translate(77 114.2) scale(1.46 1)">3.200 V</text>
<text class="wide" transform="translate(77 262.8) scale(1.46 1)">-4.800 V</text>
<text class="wide" transform="translate(146.6 262.8) scale(1.46 1)">Δ 8.000 V</text>
<!-- trigger markers -->
<path d="M518 74.8H526.9L522.45 80.8Z" fill="#35ea35"/>
<path d="M993 171.3L1001 167.2V175.4Z" fill="#35ea35"/>
<!-- channel markers -->
<path d="M41 165H48.4L52 171.4L48.4 177.8H41Z" fill="#35ee35"/>
<text x="46.3" y="174.6" font-size="8.6" fill="#0b4a0b" text-anchor="middle" font-family="DejaVu Sans, sans-serif">1</text>
<path d="M41.4 318H48.6L51.6 324.3L48.6 330.6H41.4Z" fill="#000" stroke="#efef1a" stroke-width="1"/>
<text x="46" y="327.6" font-size="8.8" fill="#efef1a" text-anchor="middle" font-family="DejaVu Sans, sans-serif">2</text>
<!-- pause glyph -->
<path d="M60.1 417.800V424.900" stroke="#d6d2ce" stroke-width="2.1"/>
<path d="M64.1 417.800V424.900" stroke="#5c5c5c" stroke-width="1.800"/>
</svg>

<span class="t" id="nochan" style="left:77.4px;top:458.4px;font-size:9.35px;color:#e6e6e6">No channel is selected</span>

<!-- ======================= CHANNEL BOXES ======================= -->
<div class="chbox" id="ch1" style="left:42px;width:90.6px;border:1px solid #2fd52f;background:radial-gradient(ellipse 78% 48% at 50% -5%,#3aea3a 0%,#38e038 35%,#2f8f37 70%,rgba(51,54,65,1) 100%),#333641">
  <div class="badge" style="background:#3cf63c">1</div>
  <span class="row" style="left:2.2px;top:23.1px">AC</span>
  <span class="row" id="r1" style="left:28.2px;top:23.1px">2 V/div</span>
  <span class="row" style="left:28.2px;top:34.2px">2.4 divs</span>
  <span class="row" id="r3" style="left:28.2px;top:46.3px">1.000 kHz</span>
</div>
<div class="chbox" id="ch2" style="left:133.6px;width:90px;border:1px solid #b4b4bc;background:#343641">
  <div class="badge" style="background:#f4f400;color:#2a2a00">2</div>
  <span class="row" style="left:2.4px;top:23.1px">DC</span>
  <span class="row" style="left:27.6px;top:23.1px">5 V/div</span>
  <span class="row" style="left:27.6px;top:34.2px">-2.0 divs</span>
  <span class="row" style="left:28.8px;top:46.3px">?</span>
</div>

<!-- ======================= MENU PILL ======================= -->
<svg width="1000" height="562" viewBox="0 0 1000 562" id="menu">
  <defs>
    <linearGradient id="pg" x1="0" y1="0" x2="0" y2="1"><stop offset="0" stop-color="#5a5a5a"/><stop offset=".5" stop-color="#3a3a3a"/><stop offset="1" stop-color="#232323"/></linearGradient>
    <linearGradient id="hg" x1="0" y1="0" x2="0" y2="1"><stop offset="0" stop-color="#858585"/><stop offset=".55" stop-color="#555"/><stop offset="1" stop-color="#333"/></linearGradient>
  </defs>
  <path d="M897.8 464.3H975V486.7H897.8A11.2 11.2 0 0 1 897.8 464.3Z" fill="url(#pg)"/>
  <path d="M912.4 464.3V486.7M939.4 464.3V486.7" stroke="#1f1f1f" stroke-width="1"/>
  <path d="M913.3 464.3V486.7M940.3 464.3V486.7" stroke="#5c5c5c" stroke-width=".6"/>
  <!-- rotate home -->
  <path d="M905.4 469.6A7.3 7.3 0 1 0 906.6 480.2" stroke="#f0f0f0" stroke-width="2" fill="none"/>
  <path d="M904.6 478.4H909.4V483.4Z" fill="#f0f0f0"/>
  <path d="M896.6 474.2L900.4 470.6L904.2 474.2M897.8 473.6V477.6H903V473.6" stroke="#f0f0f0" stroke-width="1" fill="none"/>
  <rect x="899.6" y="475" width="1.6" height="2.4" fill="#f0f0f0"/>
  <!-- floppy -->
  <path d="M920.4 470A1.2 1.2 0 0 1 921.6 468.8H931L933.4 471.2V481.8A1.2 1.2 0 0 1 932.2 483H921.6A1.2 1.2 0 0 1 920.4 481.800Z" fill="#f2f2f2"/>
  <rect x="923.2" y="469.4" width="7" height="3.8" fill="#2c2c2c"/>
  <rect x="928.4" y="470" width="1.4" height="2.6" fill="#f2f2f2"/>
  <rect x="922.2" y="475.4" width="9.4" height="6.6" fill="#2c2c2c"/>
  <path d="M922.6 476.8H931.2M922.6 478.8H931.2M922.6 480.8H931.2" stroke="#a8b8d8" stroke-width=".9"/>
  <!-- switch -->
  <rect x="945.4" y="474.6" width="7.2" height="7.8" fill="none" stroke="#f0f0f0" stroke-width="1"/>
  <rect x="955" y="468.2" width="5" height="4" fill="none" stroke="#f0f0f0" stroke-width=".9"/>
  <rect x="958" y="470.6" width="5" height="4" fill="#3a3a3a" stroke="#f0f0f0" stroke-width=".9"/>
  <path d="M948 472.6C948.6 470.4 950 469.8 951.4 469.8V468.4L953.6 470.4L951.4 472.4V471C950 471 949 471.4 948 472.600Z" fill="#f0f0f0"/>
  <path d="M955 479L956.800 480.6L960 477.400" stroke="#f0f0f0" stroke-width="1.1" fill="none"/>
  <!-- home circle -->
  <circle cx="984.2" cy="471.4" r="15.4" fill="url(#hg)"/>
  <path d="M976.1 469.4L983.8 462.200L991.500 469.400V479.500H986.300V473.400H981.500V479.500H976.100Z" fill="#f6f6f6"/>
  <path d="M974.400 470.100L983.800 461.200L993.200 470.100" stroke="#5e5e5e" stroke-width="3.6" fill="none"/>
  <path d="M974.300 469.900L983.800 460.900L993.300 469.900" stroke="#f6f6f6" stroke-width="1.700" fill="none"/>
  <path d="M988.600 461.300H990.300V466.200L988.600 464.600Z" fill="#f6f6f6"/>
  <circle cx="983.800" cy="468.600" r="1.100" fill="#5a5a5a"/>
</svg>

<!-- ======================= TIME / TRIGGER PANELS ======================= -->
<div class="abs" id="timebox">
  <div class="abs" style="left:1.4px;top:3px;width:88.2px;height:13.6px;background:#5a5d69"></div>
  <div class="abs" style="left:0;top:18.8px;width:90px;height:1px;background:#50535e"></div>
  <div class="abs" style="left:0;top:37.6px;width:90px;height:1px;background:#50535e"></div>
  <div class="abs" style="left:0;top:56px;width:90px;height:1px;background:#50535e"></div>
  <span class="row" style="left:6.4px;top:8.2px">M</span><span class="row" style="left:33.4px;top:8.2px">1ms /div</span>
  <span class="row" style="left:6.4px;top:26.2px">T</span><span class="row" style="left:30.6px;top:26.2px">0.0 ns</span>
  <span class="row" style="left:6.4px;top:44.2px">D</span><span class="row" style="left:32.4px;top:44.2px">5k</span>
  <span class="row" style="left:6.4px;top:61.8px">S</span><span class="row" id="sps" style="left:30.6px;top:61.8px">(250KS/s)</span>
</div>
<div class="abs" id="trigbox">
  <div class="tbtn" id="btrig" style="left:.8px;top:.3px;width:50.2px">Trigger</div>
  <div class="tbtn" id="bforce" style="left:51.8px;top:.3px;width:40.2px">Force</div>
  <svg width="93" height="75" viewBox="907 488 93 75" style="left:0;top:0">
    <circle cx="916.6" cy="515" r="5.6" fill="#35ee35"/>
    <text x="916.6" y="518.2" font-size="8.6" fill="#0a300a" stroke="#0a300a" stroke-width=".3" text-anchor="middle" font-family="DejaVu Sans, sans-serif">1</text>
    <path d="M930 520.600H935.200L940.200 509.600H945" stroke="#e8e8e8" stroke-width="1" fill="none"/>
    <path d="M935.400 516.200L939.800 512.300L939.400 517.400Z" fill="#ececec"/>
  </svg>
  <span class="row" id="mv" style="left:42.1px;top:22px">-0.000 mV</span>
</div>

</div>
</body>
</html>
